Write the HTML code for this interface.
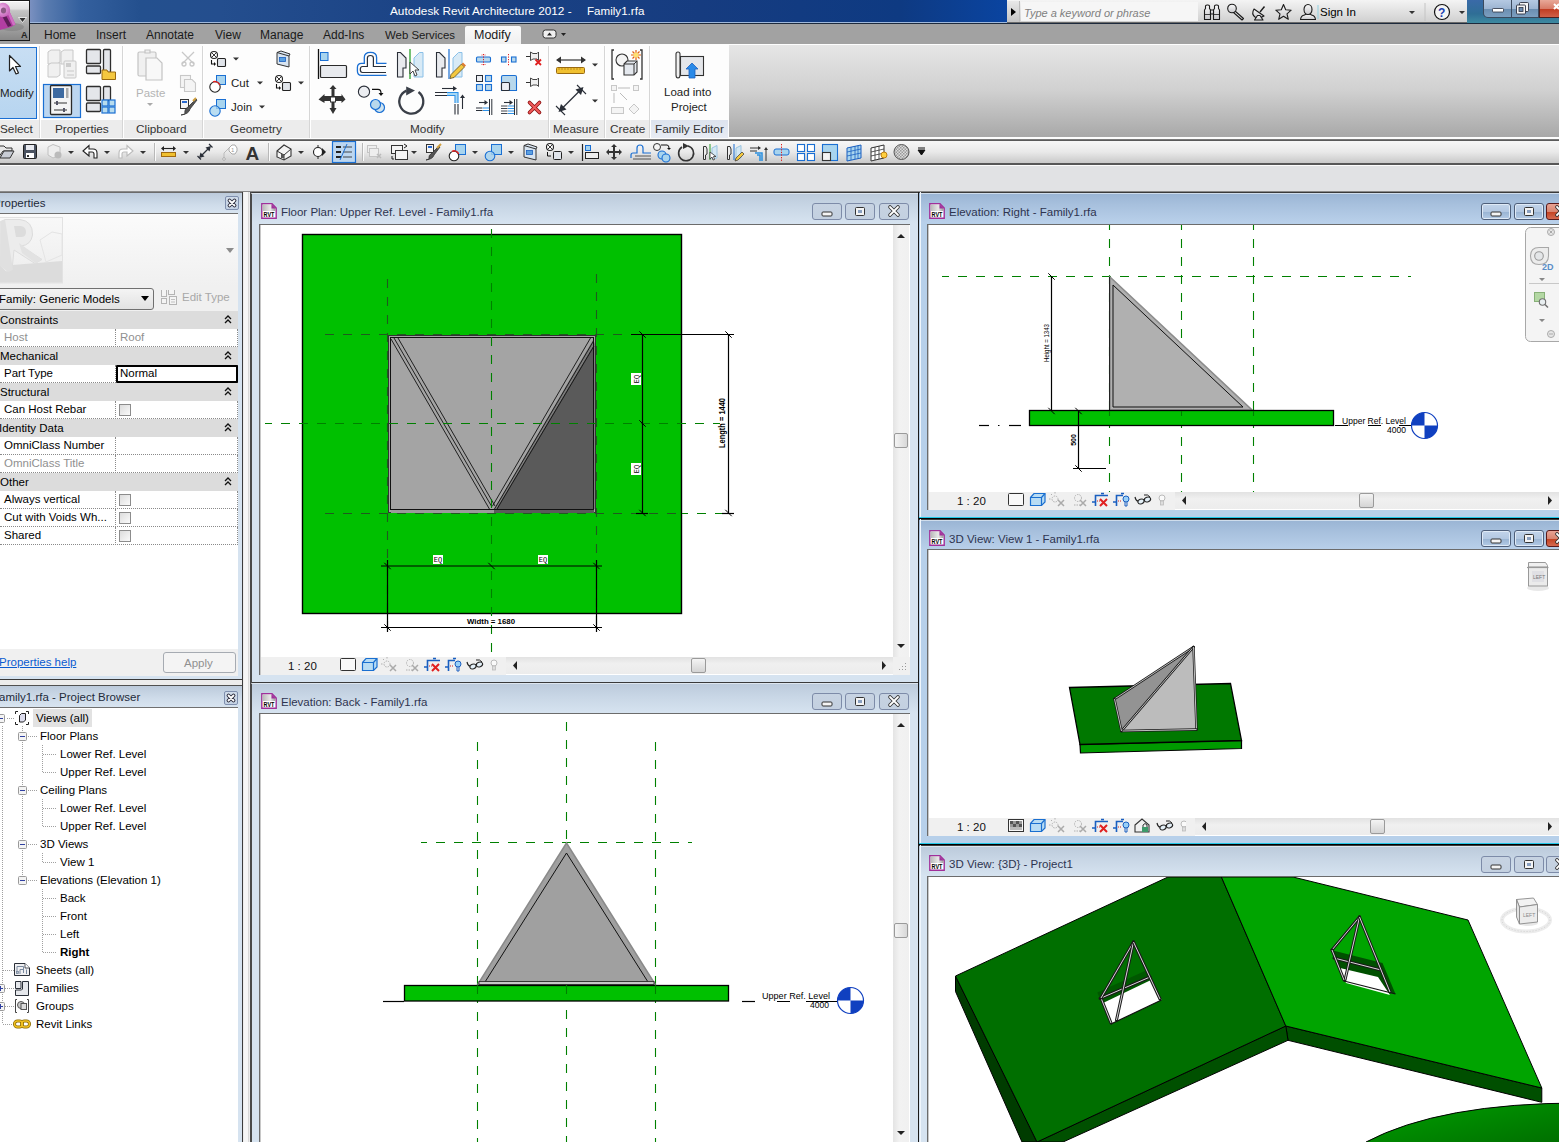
<!DOCTYPE html><html><head><meta charset="utf-8"><style>
html,body{margin:0;padding:0;}
body{width:1559px;height:1142px;overflow:hidden;position:relative;background:#c8d3e0;font-family:"Liberation Sans", sans-serif;}
.t{position:absolute;white-space:nowrap;line-height:14px;font-family:"Liberation Sans", sans-serif;}
svg{overflow:hidden}
</style></head><body>

<div style="position:absolute;left:0px;top:0px;width:1559px;height:23px;background:linear-gradient(90deg,#7a90c0 30px,#5a7cb0 45px,#34609e 80px,#24508e 140px,#244e8e 220px,#1c4486 400px,#163c80 700px,#0e3a82 900px,#0a44a0 1006px);"></div>
<div style="position:absolute;left:0px;top:22px;width:1559px;height:1px;background:#9fb8dc;"></div>
<div style="position:absolute;left:0px;top:23px;width:1559px;height:1px;background:#1d2a3c;"></div>
<div class="t" style="left:390px;top:4px;font-size:11.8px;color:#fff;">Autodesk Revit Architecture 2012 -</div>
<div class="t" style="left:587px;top:4px;font-size:11.6px;color:#fff;">Family1.rfa</div>
<div style="position:absolute;left:0px;top:0px;width:30px;height:41px;background:linear-gradient(180deg,#f4f4f4 0%,#e2e2e2 20%,#c4c4c4 25%,#a8a8a8 60%,#888 100%);border:1px solid #1a1a1a;border-left:none;border-top-width:1px;box-sizing:border-box;box-shadow:inset 0 1px 0 #fff;"></div>
<svg style="position:absolute;left:0px;top:0px;" width="30" height="41" viewBox="0 0 30 41"><defs><radialGradient id="rb" cx="0.4" cy="0.4" r="0.6"><stop offset="0" stop-color="#f0b8ea"/><stop offset="1" stop-color="#c868bc"/></radialGradient></defs><ellipse cx="12" cy="27" rx="12" ry="4" fill="#6a6a6a" opacity="0.35"/><path d="M0 13 L9 10.5 L15.5 24.5 L11 27 L0 30Z" fill="#b23ea2"/><path d="M2.5 17 L6 15.5 L11.5 25.5 L8 27Z" fill="#5e1e58"/><path d="M9 10.5 L15.5 24.5 L13 25.5 L7 12Z" fill="#d070c4"/><circle cx="3" cy="10" r="7.2" fill="url(#rb)"/><ellipse cx="3.5" cy="10.5" rx="2.6" ry="3" fill="#8c5a84"/><path d="M18.5 17.5 L26.5 17.5 L22.5 22.5Z" fill="#333" stroke="#fff" stroke-width="0.8"/><text x="21" y="38" font-size="9" font-weight="bold" fill="#222" font-family="Liberation Sans">A</text></svg>
<div style="position:absolute;left:1007px;top:0px;width:476px;height:23px;background:linear-gradient(180deg,#f4f4f4,#d0d0d0);border-bottom:1px solid #6a6a6a;box-sizing:border-box;"></div>
<div style="position:absolute;left:1007px;top:1px;width:13px;height:21px;background:linear-gradient(180deg,#e8e8e8,#c4c4c4);border-right:1px solid #bbb;box-sizing:border-box;"></div>
<svg style="position:absolute;left:1007px;top:0px;" width="13" height="23" viewBox="1007 0 13 23"><path d="M1011 8 L1016 12 L1011 16Z" fill="#000"/></svg>
<div style="position:absolute;left:1021px;top:2px;width:177px;height:19px;background:#f6f6f6;"></div>
<div class="t" style="left:1024px;top:6px;font-size:11px;color:#808080;font-style:italic;">Type a keyword or phrase</div>
<svg style="position:absolute;left:1007px;top:0px;" width="476" height="23" viewBox="1007 0 476 23">
<defs><linearGradient id="ig" x1="0" y1="0" x2="0" y2="1"><stop offset="0" stop-color="#fafafa"/><stop offset="1" stop-color="#c8c8cc"/></linearGradient></defs>
<g stroke="#1a1a1a" stroke-width="1.1" fill="url(#ig)" stroke-linejoin="round">
<path d="M1205.5 8.5 V6 Q1205.5 5 1207 5 H1208 Q1209.5 5 1209.5 6 V8.5 L1210.5 10 V19.5 H1204.5 V10Z"/>
<path d="M1214.5 8.5 V6 Q1214.5 5 1216 5 H1217 Q1218.5 5 1218.5 6 V8.5 L1219.5 10 V19.5 H1213.5 V10Z"/>
<rect x="1210.5" y="10" width="3" height="4"/>
<path d="M1204.5 14.5 H1210.5 M1213.5 14.5 H1219.5" fill="none" stroke-width="0.8"/>
<path d="M1235 11 L1243.5 18.5 L1242 20 L1233.5 12.5Z"/>
<circle cx="1232" cy="8.5" r="4.3"/>
<path d="M1254 9 Q1251 14 1255 17 Q1259 19 1264 16Z"/>
<path d="M1254.5 20 L1257.5 15.5 L1260 15.5 L1263 20Z"/>
<path d="M1260 12 L1264.5 6.5" fill="none" stroke-width="1.4"/>
<path d="M1283.5 4.5 L1285.7 9.8 L1291.2 10.2 L1287 13.8 L1288.3 19.3 L1283.5 16.3 L1278.7 19.3 L1280 13.8 L1275.8 10.2 L1281.3 9.8Z"/>
<path d="M1300.5 19.5 Q1301 15.5 1304.5 15 L1306 14 H1310 L1311.5 15 Q1315 15.5 1315.5 19.5Z"/>
<ellipse cx="1308" cy="9.5" rx="4" ry="5"/>
</g>
<line x1="1318" y1="5" x2="1318" y2="19" stroke="#8fd0e0" stroke-width="1"/>
<path d="M1409 11 L1415 11 L1412 14Z M1459 11 L1465 11 L1462 14Z" fill="#333"/>
<line x1="1425" y1="3" x2="1425" y2="21" stroke="#c4c4c4"/>
<circle cx="1442" cy="12" r="7.5" fill="#f4f4f4" stroke="#111" stroke-width="1.2"/>
<text x="1438" y="16.5" font-size="12" font-weight="bold" fill="#1a3fb0" font-family="Liberation Sans">?</text>
</svg>
<div class="t" style="left:1320px;top:5px;font-size:11.5px;color:#000;">Sign In</div>
<div style="position:absolute;left:1467px;top:0px;width:92px;height:23px;background:linear-gradient(180deg,#3a6aa8 0%,#2f6e96 60%,#3d8aa0 100%);"></div>
<div style="position:absolute;left:1483px;top:0px;width:29px;height:18px;background:linear-gradient(180deg,#b5c9e2 0%,#9db5d2 50%,#6a8db0 51%,#7c9fc0 100%);border:1px solid #3b4a5e;border-top:none;border-radius:0 0 0 5px;box-sizing:border-box;"></div>
<div style="position:absolute;left:1511px;top:0px;width:28px;height:18px;background:linear-gradient(180deg,#b5c9e2 0%,#9db5d2 50%,#6a8db0 51%,#7c9fc0 100%);border:1px solid #3b4a5e;border-top:none;box-sizing:border-box;"></div>
<div style="position:absolute;left:1539px;top:0px;width:20px;height:18px;background:linear-gradient(180deg,#e8a898 0%,#d87c68 50%,#c03a20 51%,#d06048 100%);border:1px solid #4a2020;border-top:none;border-right:none;box-sizing:border-box;"></div>
<svg style="position:absolute;left:1483px;top:0px;" width="76" height="18" viewBox="1483 0 76 18"><rect x="1492.5" y="8.5" width="11" height="3.5" rx="0.8" fill="#fff" stroke="#2a3040" stroke-width="0.8"/><rect x="1519.5" y="2.5" width="9" height="9" rx="1" fill="#f4f4f4" stroke="#2a3040" stroke-width="0.9"/><rect x="1516.5" y="5" width="9" height="9" rx="1" fill="#f4f4f4" stroke="#2a3040" stroke-width="0.9"/><rect x="1519" y="7.5" width="4" height="4" fill="#6a8ab0" stroke="#2a3040" stroke-width="0.8"/><path d="M1554 4 L1559 9 M1554 9 L1559 4" stroke="#fff" stroke-width="2"/></svg>
<div style="position:absolute;left:30px;top:24px;width:1529px;height:20px;background:#a2a2a2;"></div>
<div style="position:absolute;left:0px;top:41px;width:30px;height:3px;background:#a2a2a2;"></div>
<div class="t" style="left:44px;top:28px;font-size:12.01px;color:#1a1a1a;">Home</div>
<div class="t" style="left:96px;top:28px;font-size:12.01px;color:#1a1a1a;">Insert</div>
<div class="t" style="left:146px;top:28px;font-size:12.01px;color:#1a1a1a;">Annotate</div>
<div class="t" style="left:215px;top:28px;font-size:12.01px;color:#1a1a1a;">View</div>
<div class="t" style="left:260px;top:28px;font-size:12.01px;color:#1a1a1a;">Manage</div>
<div class="t" style="left:323px;top:28px;font-size:12.01px;color:#1a1a1a;">Add-Ins</div>
<div class="t" style="left:385px;top:28px;font-size:11.4px;color:#1a1a1a;">Web Services</div>
<div style="position:absolute;left:465px;top:26px;width:56px;height:18px;background:linear-gradient(180deg,#fafafa,#f0f0f0);border-radius:2px 2px 0 0;"></div>
<div class="t" style="left:474px;top:28px;font-size:12.5px;color:#1a1a1a;">Modify</div>
<svg style="position:absolute;left:540px;top:26px;" width="30" height="18" viewBox="540 26 30 18"><rect x="543" y="30" width="13" height="8" rx="2.5" fill="#f0f0f0" stroke="#333" stroke-width="1"/><path d="M547 35.5 L549.5 32.5 L552 35.5Z" fill="#222"/><path d="M561 33 L566 33 L563.5 36Z" fill="#222"/></svg>
<div style="position:absolute;left:0px;top:44px;width:728px;height:96px;background:#fdfdfd;"></div>
<div style="position:absolute;left:728px;top:44px;width:831px;height:95px;background:#fdfdfd;"></div>
<div style="position:absolute;left:729px;top:45px;width:830px;height:92px;background:linear-gradient(180deg,#e6e6e6 0%,#d0d0d0 50%,#a8a8a8 100%);"></div>
<div style="position:absolute;left:0px;top:120px;width:728px;height:18px;background:#ececec;"></div>
<div style="position:absolute;left:39px;top:46px;width:1px;height:92px;background:#d6d6d6;border-right:1px solid #fff;"></div>
<div style="position:absolute;left:122px;top:46px;width:1px;height:92px;background:#d6d6d6;border-right:1px solid #fff;"></div>
<div style="position:absolute;left:202px;top:46px;width:1px;height:92px;background:#d6d6d6;border-right:1px solid #fff;"></div>
<div style="position:absolute;left:309px;top:46px;width:1px;height:92px;background:#d6d6d6;border-right:1px solid #fff;"></div>
<div style="position:absolute;left:548px;top:46px;width:1px;height:92px;background:#d6d6d6;border-right:1px solid #fff;"></div>
<div style="position:absolute;left:604px;top:46px;width:1px;height:92px;background:#d6d6d6;border-right:1px solid #fff;"></div>
<div style="position:absolute;left:649px;top:46px;width:1px;height:92px;background:#d6d6d6;border-right:1px solid #fff;"></div>
<div style="position:absolute;left:651px;top:120px;width:77px;height:18px;background:linear-gradient(180deg,#dde3ee,#e8ecf4);"></div>
<div class="t" style="left:0px;top:122px;font-size:11.8px;color:#333;">Select</div>
<div class="t" style="left:55px;top:122px;font-size:11.8px;color:#333;">Properties</div>
<div class="t" style="left:136px;top:122px;font-size:11.8px;color:#333;">Clipboard</div>
<div class="t" style="left:230px;top:122px;font-size:11.8px;color:#333;">Geometry</div>
<div class="t" style="left:410px;top:122px;font-size:11.8px;color:#333;">Modify</div>
<div class="t" style="left:553px;top:122px;font-size:11.8px;color:#333;">Measure</div>
<div class="t" style="left:610px;top:122px;font-size:11.8px;color:#333;">Create</div>
<div class="t" style="left:655px;top:122px;font-size:11.8px;color:#333;">Family Editor</div>
<div style="position:absolute;left:0px;top:47px;width:37px;height:72px;background:linear-gradient(180deg,#c8def3,#b7d5f0);border:1px solid #1a6fd3;border-left:none;box-sizing:border-box;"></div>
<div class="t" style="left:0px;top:86px;font-size:11.5px;color:#222;">Modify</div>
<svg style="position:absolute;left:0px;top:44px;" width="728" height="76" viewBox="0 44 728 76"><path d="M9.5 55.5 V71 L13 67.5 L16 74 L18.5 73 L15.5 66.5 L20.5 66.5 Z" fill="#fff" stroke="#222" stroke-width="1.2" stroke-linejoin="round"/><g fill="#f0f0f0" stroke="#c8c8c8" stroke-width="1"><path d="M48 52 L51 50 H60 V62 L57 64 H48Z"/><path d="M61 52 L64 50 H73 V62 L70 64 H61Z"/><path d="M48 65 L51 63 H60 V75 L57 77 H48Z"/><rect x="64" y="61" width="12" height="17" rx="1"/></g><rect x="66" y="63" width="5" height="4" fill="#ccc"/><path d="M67 71 H74 M67 75 H74" stroke="#c8c8c8"/><g fill="#e4e6ea" stroke="#2e2e2e" stroke-width="1.3"><rect x="86.5" y="49.5" width="14" height="14" rx="1"/><rect x="103.5" y="49.5" width="7" height="23" rx="1"/><rect x="86.5" y="66" width="14" height="7.5" rx="1"/></g><path d="M102 70 H107 L108 72 H115.5 V79.5 H102Z" fill="#f4c840" stroke="#9a6a10" stroke-width="1"/><rect x="43.5" y="84.5" width="37" height="33" fill="#bcd6f0" stroke="#1a6fd3" stroke-width="1.2"/><rect x="50.5" y="85.5" width="21" height="29" rx="1" fill="#f4f4f4" stroke="#2a2a2a" stroke-width="1.3"/><rect x="53" y="88" width="11" height="10" fill="#3e6aa0"/><rect x="66" y="88" width="2.5" height="10" fill="#aaa"/><path d="M54 103 H67 M54 110 H67" stroke="#333" stroke-width="1"/><rect x="56" y="101" width="2" height="4" fill="#556"/><rect x="63" y="108" width="2" height="4" fill="#556"/><g fill="#e4e6ea" stroke="#2e2e2e" stroke-width="1.3"><rect x="86.5" y="86.5" width="14" height="14" rx="1"/><rect x="103.5" y="86.5" width="7" height="14" rx="1"/><rect x="86.5" y="103" width="14" height="8.5" rx="1"/></g><g fill="#b8dcee" stroke="#1a6fd3" stroke-width="1.2"><rect x="102" y="100" width="6" height="6"/><rect x="109" y="100" width="6" height="6"/><rect x="102" y="107" width="6" height="6"/><rect x="109" y="107" width="6" height="6"/></g><g fill="#f0f0f0" stroke="#c4c4c4" stroke-width="1.2"><rect x="138" y="52" width="18" height="24" rx="1.5"/><path d="M145 50 H150 V53 H145Z"/><path d="M146 58 H157 L162 63 V80 H146Z" fill="#f8f8f8"/></g><path d="M147 103 L153 103 L150 106Z" fill="#aaa"/><g stroke="#c8c8c8" stroke-width="1.3" fill="none"><path d="M182 52 L194 64 M194 52 L182 64"/><circle cx="184" cy="64" r="2"/><circle cx="192" cy="64" r="2"/></g><g fill="#f4f4f4" stroke="#c8c8c8" stroke-width="1.1"><rect x="180.5" y="75.5" width="10" height="12"/><path d="M184.5 79.5 H192 L195.5 83 V91.5 H184.5Z"/></g><rect x="180.5" y="99.5" width="8" height="9" fill="#f4f4f4" stroke="#333"/><rect x="182" y="101" width="5" height="2" fill="#2a6ad0"/><path d="M185 114 Q184 109 188 107 L196 99 L197 100 L190 109 Q189 114 181 115Z" fill="#555" stroke="#333" stroke-width="0.8"/><path d="M193 101 L196 98" stroke="#d0a040" stroke-width="2"/><circle cx="214" cy="55" r="3.5" fill="#fff" stroke="#222" stroke-width="1.1"/><path d="M211.5 52.5 L216.5 57.5 M216.5 52.5 L211.5 57.5" stroke="#222" stroke-width="0.9"/><rect x="217.5" y="58.5" width="8" height="8" rx="1" fill="#e0e4ea" stroke="#222" stroke-width="1.1"/><path d="M211.5 60 V64 H215" stroke="#111" stroke-width="1.1" fill="none"/><path d="M214 62 L216 64 L214 66Z" fill="#111"/><path d="M233 57.5 H239 L236 60.5Z" fill="#333"/><rect x="216.5" y="75.5" width="9" height="9" fill="#a8d4ee" stroke="#1a6fd3"/><circle cx="215" cy="87" r="5.2" fill="#fff" stroke="#222" stroke-width="1.1"/><path d="M213 81.9 A5.2 5.2 0 0 1 219.8 85" stroke="#e02020" stroke-width="1.3" fill="none"/><path d="M257 81.5 H263 L260 84.5Z" fill="#333"/><rect x="216.5" y="99.5" width="9" height="9" fill="#a8d4ee" stroke="#1a6fd3"/><circle cx="215" cy="111" r="5.2" fill="#a8d4ee" fill-opacity="0.8" stroke="#1a6fd3" stroke-width="1.1"/><path d="M259 105.5 H265 L262 108.5Z" fill="#333"/><path d="M277 52.5 L289 56 V67 L277 64Z M277 52.5 L281 51 L290 54 L289 56" fill="#d8e4f0" stroke="#333" stroke-width="1"/><rect x="279.5" y="57.5" width="6" height="4" fill="#5aa0e0" stroke="#1a5fc0" stroke-width="0.8"/><circle cx="279" cy="79" r="3.5" fill="#fff" stroke="#222" stroke-width="1.1"/><path d="M276.5 76.5 L281.5 81.5 M281.5 76.5 L276.5 81.5" stroke="#222" stroke-width="0.9"/><rect x="282.5" y="82.5" width="8" height="8" rx="1" fill="#e0e4ea" stroke="#222" stroke-width="1.1"/><path d="M276.5 84 V88 H280" stroke="#111" stroke-width="1.1" fill="none"/><path d="M279 86 L281 88 L279 90Z" fill="#111"/><path d="M298 81.5 H304 L301 84.5Z" fill="#333"/><path d="M318.5 49 V79" stroke="#111" stroke-width="1.3"/><rect x="320.5" y="52.5" width="7.5" height="8" fill="#a8d4ee" stroke="#1a6fd3"/><rect x="320.5" y="65.5" width="26" height="12" rx="1" fill="#e8eaee" stroke="#2a2a2a" stroke-width="1.2"/><path d="M386.5 63.3 H376.6 V57.5 Q376.6 52.3 370.5 52.3 Q364.3 52.3 364.3 57.5 V63.3 H361.5 Q357.4 63.3 357.4 67.5 V71 Q357.4 75.3 361.5 75.3 H386.5" fill="none" stroke="#1a6fd3" stroke-width="1.3"/><path d="M386 66.5 H373.4 V58 Q373.4 55.5 370.4 55.5 Q367.4 55.5 367.4 58 V66.5 H362.5 Q360.3 66.5 360.3 69.5 Q360.3 72.5 362.5 72.5 H386" fill="none" stroke="#2a2f38" stroke-width="1.2"/><path d="M397.5 52.5 H400.5 L406 58 V68 H403 V77 H397.5Z" fill="#e8eaee" stroke="#2a2f38" stroke-width="1.1"/><line x1="410" y1="49" x2="410" y2="79" stroke="#1a9a1a" stroke-width="1.2"/><path d="M414 58 L419.5 52.5 H423 V77 H414Z" fill="#d8eaf6" stroke="#8ac0e8"/><path d="M410 62 V74 L413 71 L415 76 L417 75 L415 70 H419Z" fill="#fff" stroke="#333" stroke-width="0.9"/><path d="M436.5 52.5 H439.5 L445 58 V68 H442 V77 H436.5Z" fill="#e8eaee" stroke="#2a2f38" stroke-width="1.1"/><line x1="449" y1="49" x2="449" y2="79" stroke="#1a6fd3" stroke-width="1.2"/><path d="M453 58 L458.5 52.5 H462 V77 H453Z" fill="#d8eaf6" stroke="#8ac0e8"/><path d="M450 78.5 L451 74.5 L461.5 64 L464.5 67 L454 77.5Z" fill="#f4c840" stroke="#5a4a20" stroke-width="0.8"/><path d="M461.5 64 L463 62.5 L466 65.5 L464.5 67Z" fill="#e07a30"/><path d="M333 85 L336.5 89 H334.5 V96 H341.5 V94 L345.5 99.5 L341.5 103 V101 H334.5 V108 H336.5 L333 114 L329.5 108 H331.5 V101 H324.5 V103 L318.5 99.5 L324.5 94 V96 H331.5 V89 H329.5Z" fill="#333"/><rect x="330.5" y="97" width="5" height="5" fill="#fff" stroke="#333"/><circle cx="364" cy="91.7" r="5.6" fill="#eceef2" stroke="#2a2f38" stroke-width="1.1"/><path d="M372 89.3 H378 Q381 89.3 381 93" stroke="#111" stroke-width="1.2" fill="none"/><path d="M378.5 93 L383.5 93 L381 96Z" fill="#111"/><circle cx="379.5" cy="107.5" r="5" fill="#cfe4f0" stroke="#1a6fd3" stroke-width="1.2"/><circle cx="375.5" cy="104.5" r="5" fill="#b8d8ec" stroke="#1a6fd3" stroke-width="1.2"/><path d="M418.5 92 A12 12 0 1 1 406.5 90.6" fill="none" stroke="#3a3f48" stroke-width="2.3"/><path d="M406.2 86.4 L415 90.5 L406.2 95.5Z" fill="#3a3f48"/><path d="M442 88.5 H454" stroke="#2a2f38" stroke-width="1.1"/><path d="M453 86 L457 88.5 L453 91Z" fill="#2a2f38"/><path d="M435 92.5 H447 M435 95.5 H447" stroke="#2a2f38" stroke-width="1.1"/><path d="M447 94 H456.5 V103" stroke="#a8d8f4" stroke-width="2.5" fill="none"/><path d="M447 92.5 H458 V103 M447 95.5 H455 V103" stroke="#2a90e8" stroke-width="1.1" fill="none"/><path d="M455 104 V114.5 M458 104 V114.5" stroke="#2a2f38" stroke-width="1.1"/><path d="M462.5 109 V97" stroke="#2a2f38" stroke-width="1.1"/><path d="M460 98 L462.5 94.5 L465 98Z" fill="#2a2f38"/><rect x="476.5" y="57" width="14" height="5" rx="1" fill="#b8d8ec" stroke="#1a6fd3" stroke-width="1.1"/><path d="M483.5 54 V65.5" stroke="#e02020" stroke-width="1" stroke-dasharray="1.2 1.3"/><path d="M481.5 55 H485.5 M481.5 64.5 H485.5" stroke="#e02020" stroke-width="0.8" stroke-dasharray="1 2"/><rect x="501.5" y="57" width="4.5" height="5" fill="#b8d8ec" stroke="#1a6fd3" stroke-width="1.1"/><rect x="511.5" y="57" width="4.5" height="5" fill="#b8d8ec" stroke="#1a6fd3" stroke-width="1.1"/><path d="M508.5 54 V65.5" stroke="#e02020" stroke-width="1" stroke-dasharray="1.2 1.3"/><path d="M526 56.5 H530" stroke="#333"/><path d="M530.5 52 L533 53.5 H537 L538.5 52 V60.5 L537 59 H533 L530.5 60.5Z" fill="#f0f0f0" stroke="#333" stroke-width="0.9"/><path d="M535.5 59.5 L541 65 M541 59.5 L535.5 65" stroke="#e02020" stroke-width="1.8"/><rect x="476.5" y="75.5" width="6" height="6" fill="#eceef2" stroke="#2a2f38" stroke-width="1"/><g fill="#b8d8ec" stroke="#1a6fd3" stroke-width="1.1"><rect x="485.5" y="75.5" width="6" height="6"/><rect x="476.5" y="84.5" width="6" height="6"/><rect x="485.5" y="84.5" width="6" height="6"/></g><path d="M501.5 90.5 V77 Q501.5 75.5 503 75.5 H515 Q516.5 75.5 516.5 77 V90.5Z" fill="#b8d8ec" stroke="#1a6fd3" stroke-width="1.1"/><rect x="501.5" y="82.5" width="8" height="8" rx="1" fill="#eceef2" stroke="#2a2f38" stroke-width="1.1"/><path d="M526 82.5 H530" stroke="#333"/><path d="M530.5 78 L533 79.5 H537 L538.5 78 V86.5 L537 85 H533 L530.5 86.5Z" fill="#f0f0f0" stroke="#333" stroke-width="0.9"/><path d="M479 102.5 H485" stroke="#2a2f38" stroke-width="1.1"/><path d="M484.5 100 L488 102.5 L484.5 105Z" fill="#2a2f38"/><path d="M476 108 H482.5 M476 110.5 H482.5" stroke="#2a2f38" stroke-width="1"/><path d="M483 108 H489 M483 110.5 H489" stroke="#2a90e8" stroke-width="1.1"/><path d="M489.5 99 V115 M491.8 99 V115" stroke="#2a2f38" stroke-width="1"/><path d="M504 102.5 H510" stroke="#2a2f38" stroke-width="1.1"/><path d="M509.5 100 L513 102.5 L509.5 105Z" fill="#2a2f38"/><path d="M501 106 H507.5 M501 108.5 H507.5 M501 111 H507.5 M501 113.5 H507.5" stroke="#2a2f38" stroke-width="0.9"/><path d="M508 106 H514 M508 108.5 H514 M508 111 H514 M508 113.5 H514" stroke="#2a90e8" stroke-width="1"/><path d="M514.5 99 V115 M516.8 99 V115" stroke="#2a2f38" stroke-width="1"/><path d="M529.5 102.5 L539.5 112.5 M539.5 102.5 L529.5 112.5" stroke="#8a1010" stroke-width="3.6" stroke-linecap="round"/><path d="M529.5 102.5 L539.5 112.5 M539.5 102.5 L529.5 112.5" stroke="#f05a5a" stroke-width="2" stroke-linecap="round"/><path d="M557 60 H585" stroke="#333" stroke-width="1.2"/><path d="M556 60 L561 56.5 V63.5Z M586 60 L581 56.5 V63.5Z" fill="#333"/><rect x="556.5" y="67.5" width="28" height="6" rx="1" fill="#f0c030" stroke="#9a6a10"/><path d="M559 68 V70 M562 68 V70 M565 68 V70 M568 68 V70 M571 68 V70 M574 68 V70 M577 68 V70 M580 68 V70" stroke="#9a6a10" stroke-width="0.6"/><path d="M592 63.5 H598 L595 66.5Z" fill="#333"/><path d="M562 108.5 L580 90.5" stroke="#2a2f38" stroke-width="1.3"/><path d="M558.5 112 L561 104 L566.5 109.5Z M583.5 87 L581 95 L575.5 89.5Z" fill="#2a2f38"/><path d="M556 106 L565 115 M577 85 L586 94" stroke="#2a2f38" stroke-width="1.1"/><path d="M592 99.5 H598 L595 102.5Z" fill="#333"/><path d="M614 50 H612 V79 H614 M640 50 H642 V79 H640" stroke="#333" stroke-width="1.3" fill="none"/><circle cx="622" cy="60" r="6" fill="#f4f4f4" stroke="#333" stroke-width="1.1"/><path d="M624 64 L627 61 H637 V72 L634 75 H624Z" fill="#e4e8ee" stroke="#333" stroke-width="1.1"/><path d="M624 64 H634 V75 M634 64 L637 61" fill="none" stroke="#333" stroke-width="1"/><g stroke="#e06010" stroke-width="1.2"><path d="M636 50 V60 M631 55 H641 M632.5 51.5 L639.5 58.5 M639.5 51.5 L632.5 58.5"/></g><circle cx="636" cy="55" r="2.5" fill="#ffe070"/><g fill="#f4f4f4" stroke="#c8c8c8" stroke-width="1"><rect x="611.5" y="85.5" width="5" height="5"/><rect x="633.5" y="85.5" width="5" height="5"/><rect x="611.5" y="107.5" width="12" height="6"/><path d="M634 104 L639 109 L634 114 L629 109Z"/></g><path d="M618 88 H630 M614 93 V103 M620 93 L627 100" stroke="#bbb" stroke-width="1"/><path d="M676 54 Q676 52 678 52 Q680 52 680 54 V75 Q680 78 678 78 Q676 78 676 75Z" fill="#f0f0f0" stroke="#333" stroke-width="1.1"/><rect x="680.5" y="56.5" width="23" height="19" fill="#e4e6ea" stroke="#333" stroke-width="1.1"/><path d="M692 63 L698 69 H695 V78 H689 V69 H686Z" fill="#2a8ae8" stroke="#1a5fc0" stroke-width="0.8"/></svg>
<div class="t" style="left:664px;top:85px;font-size:11.5px;color:#222;">Load into</div>
<div class="t" style="left:671px;top:100px;font-size:11.5px;color:#222;">Project</div>
<div class="t" style="left:136px;top:86px;font-size:11.5px;color:#b4b4b4;">Paste</div>
<div class="t" style="left:231px;top:76px;font-size:11.5px;color:#222;">Cut</div>
<div class="t" style="left:231px;top:100px;font-size:11.5px;color:#222;">Join</div>
<div style="position:absolute;left:0px;top:138px;width:1559px;height:1px;background:#fdfdfd;"></div>
<div style="position:absolute;left:0px;top:139px;width:1559px;height:2px;background:linear-gradient(180deg,#8a8a8a,#4a4a4a);"></div>
<div style="position:absolute;left:0px;top:141px;width:1559px;height:22px;background:linear-gradient(180deg,#f7f7f7 0%,#e9e9e9 50%,#c9c9c9 100%);"></div>
<div style="position:absolute;left:0px;top:163px;width:1559px;height:2px;background:#575757;"></div>
<svg style="position:absolute;left:0px;top:141px;" width="1000" height="22" viewBox="0 141 1000 22"><path d="M-2 146 H4 L6 148 H12 V151 H3 L-2 158Z" fill="#e8e8e8" stroke="#333" stroke-width="1"/><path d="M0 158 L4 151 H14 L10 158Z" fill="#c8ccd4" stroke="#333" stroke-width="1"/><rect x="23.5" y="144.5" width="13" height="14" rx="1" fill="#4a5260" stroke="#222"/><rect x="26" y="145" width="8" height="5" fill="#e8eaf0"/><rect x="26" y="153" width="8" height="5" fill="#fff"/><rect x="27" y="155" width="2" height="2" fill="#333"/><path d="M48 147 L53 144.5 L60 147 V155 L53 158 L48 155Z" fill="#eee" stroke="#c0c0c0"/><circle cx="58" cy="155" r="3.5" fill="#bbb"/><path d="M68 151 H74 L71 154Z" fill="#333"/><path d="M83 151 L89 145.5 V149 H93 Q97 149 97 153 V158 H94 V154 Q94 152 92 152 H89 V156Z" fill="#fff" stroke="#222" stroke-width="1.1"/><path d="M104 151 H110 L107 154Z" fill="#333"/><path d="M133 151 L127 145.5 V149 H123 Q119 149 119 153 V158 H122 V154 Q122 152 124 152 H127 V156Z" fill="#fff" stroke="#bbb" stroke-width="1.1"/><path d="M140 151 H146 L143 154Z" fill="#333"/><line x1="154.5" y1="143" x2="154.5" y2="161" stroke="#b8b8b8"/><line x1="155.5" y1="143" x2="155.5" y2="161" stroke="#fafafa"/><path d="M162 148.5 H175" stroke="#222" stroke-width="1.1"/><path d="M161 148.5 L164 146 V151Z M176 148.5 L173 146 V151Z" fill="#222"/><rect x="161.5" y="152.5" width="14" height="4" fill="#f0c030" stroke="#a06a10"/><path d="M183 151 H189 L186 154Z" fill="#333"/><path d="M201.5 155.5 L208.5 148.5" stroke="#2a2f38" stroke-width="1.3"/><path d="M199 158 L200.5 152.5 L204.5 156.5Z M211 146 L209.5 151.5 L205.5 147.5Z" fill="#2a2f38"/><path d="M197.5 156 L201 159.5 M209 144 L212.5 147.5" stroke="#2a2f38" stroke-width="1.2"/><path d="M224 158 V153 L229 148" stroke="#bbb" fill="none"/><circle cx="224" cy="159" r="1.3" fill="#fff" stroke="#aaa"/><path d="M229 148 L232 145 H235 L237 148 V151 L235 154 H232 L229 151Z" fill="#fff" stroke="#aaa"/><text x="231" y="152" font-size="6" fill="#999" font-family="Liberation Sans">1</text><text x="245.5" y="159.5" font-size="19" font-weight="bold" fill="#333" font-family="Liberation Sans">A</text><line x1="268.5" y1="143" x2="268.5" y2="161" stroke="#b8b8b8"/><line x1="269.5" y1="143" x2="269.5" y2="161" stroke="#fafafa"/><path d="M277 151 L284 145 L291 149 V156 L284 160 L277 157Z" fill="#f4f4f4" stroke="#333" stroke-width="1.1"/><path d="M277 151 L284 155 L291 149 M284 155 V160" stroke="#333" fill="none"/><rect x="281" y="154" width="3" height="4" fill="#555"/><path d="M298 151 H304 L301 154Z" fill="#333"/><circle cx="318" cy="152" r="4.5" fill="#fff" stroke="#222" stroke-width="1.1"/><path d="M322 148 L326 152 L322 156Z" fill="#222"/><path d="M318 147 V145 M318 157 V159" stroke="#222"/><rect x="332.5" y="141.5" width="23" height="21" fill="#bcd6f0" stroke="#1a6fd3" stroke-width="1.2"/><path d="M336 147 H341 M336 152 H341 M336 157 H341" stroke="#222" stroke-width="2"/><path d="M343 147 H352 M343 152 H352 M343 157 H352" stroke="#222" stroke-width="0.8"/><path d="M340 160 L347 144" stroke="#1a6fd3" stroke-width="1"/><line x1="362.5" y1="143" x2="362.5" y2="161" stroke="#b8b8b8"/><line x1="363.5" y1="143" x2="363.5" y2="161" stroke="#fafafa"/><rect x="367.5" y="145.5" width="9" height="7" fill="#eee" stroke="#c4c4c4"/><rect x="369.5" y="148.5" width="9" height="8" fill="#eee" stroke="#c4c4c4"/><path d="M377 154 L381 158 M381 154 L377 158" stroke="#bbb" stroke-width="1.5"/><rect x="391.5" y="145.5" width="11" height="8" fill="#f4f4f4" stroke="#333"/><rect x="395.5" y="150.5" width="12" height="9" fill="#f4f4f4" stroke="#333"/><path d="M404 144 L407 146 L404 148 M392 156 L392 159 H394" stroke="#222" fill="none"/><path d="M411 151 H417 L414 154Z" fill="#333"/><rect x="426.5" y="144.5" width="7" height="8" fill="#f4f4f4" stroke="#333"/><rect x="428" y="146" width="4" height="2" fill="#2a6ad0"/><path d="M429 159 Q428 155 432 153 L439 146 L440 147 L434 155 Q433 159 426 160Z" fill="#555" stroke="#333" stroke-width="0.8"/><path d="M437 148 L441 144" stroke="#d0a040" stroke-width="2"/><rect x="455.5" y="144.5" width="10" height="10" fill="#a8d4ee" stroke="#1a6fd3"/><circle cx="454" cy="156" r="4.8" fill="#fff" stroke="#222" stroke-width="1.1"/><path d="M452 151.3 A4.8 4.8 0 0 1 458.7 154" stroke="#e02020" stroke-width="1.3" fill="none"/><path d="M472 151 H478 L475 154Z" fill="#333"/><rect x="491.5" y="144.5" width="10" height="10" fill="#a8d4ee" stroke="#1a6fd3"/><circle cx="490" cy="156" r="4.8" fill="#a8d4ee" fill-opacity="0.85" stroke="#1a6fd3" stroke-width="1.1"/><path d="M508 151 H514 L511 154Z" fill="#333"/><path d="M524 145.5 L536 149 V160 L524 157Z M524 145.5 L528 144 L537 147 L536 149" fill="#d8e4f0" stroke="#333" stroke-width="1"/><rect x="526.5" y="150.5" width="6" height="4" fill="#5aa0e0" stroke="#1a5fc0" stroke-width="0.8"/><circle cx="550" cy="147" r="3.5" fill="#fff" stroke="#222" stroke-width="1.1"/><path d="M547.5 144.5 L552.5 149.5 M552.5 144.5 L547.5 149.5" stroke="#222" stroke-width="0.9"/><rect x="553.5" y="151.5" width="8" height="8" rx="1" fill="#e0e4ea" stroke="#222"/><path d="M547.5 152 V156 H551" stroke="#111" fill="none"/><path d="M568 151 H574 L571 154Z" fill="#333"/><path d="M582.5 144 V161" stroke="#222" stroke-width="1.2"/><rect x="585.5" y="145.5" width="5" height="5" fill="#a8d4ee" stroke="#1a6fd3"/><rect x="585.5" y="152.5" width="13" height="6" fill="#eee" stroke="#222"/><path d="M614 144 L617 147 H615 V151 H619 V149 L622 152 L619 155 V153 H615 V157 H617 L614 160 L611 157 H613 V153 H609 V155 L606 152 L609 149 V151 H613 V147 H611Z" fill="#333"/><path d="M631 158 V155 Q631 153 633 153 H637 V148 Q637 145 640 145 Q643 145 643 148 V153 H651" fill="none" stroke="#1a6fd3" stroke-width="1.2"/><path d="M633 159 H651 M635 156 H651" stroke="#333" stroke-width="0.8"/><circle cx="657" cy="147" r="3.5" fill="#f4f4f4" stroke="#333"/><path d="M661 145 H667 Q669 145 669 148" stroke="#111" fill="none"/><path d="M667 148 H671 L669 150Z" fill="#111"/><circle cx="662" cy="155" r="4" fill="#a8d4ee" stroke="#1a6fd3" stroke-width="1.1"/><circle cx="666" cy="158" r="4" fill="#a8d4ee" stroke="#1a6fd3" stroke-width="1.1"/><path d="M682 147 A7.5 7.5 0 1 0 688 146" fill="none" stroke="#333" stroke-width="1.6"/><path d="M683 143 L689 146 L683 149Z" fill="#333"/><path d="M703.5 146.5 H706 L707 149 V154 L705.5 155 V159.5 H703.5Z" fill="#eee" stroke="#333" stroke-width="1"/><line x1="710" y1="144" x2="710" y2="160" stroke="#2aa02a"/><path d="M712 148 L717 145.5 V158 L712 159Z" fill="#d4e8f4" stroke="#9ac4e0"/><path d="M710 152 V159 L712 157 L713 160 L714.5 159.5 L713.5 156.5 H716Z" fill="#fff" stroke="#333" stroke-width="0.8"/><path d="M727.5 146.5 H730 L731 149 V154 L729.5 155 V159.5 H727.5Z" fill="#eee" stroke="#333" stroke-width="1"/><line x1="734" y1="144" x2="734" y2="160" stroke="#1a6fd3"/><path d="M736 148 L741 145.5 V158 L736 159Z" fill="#d4e8f4" stroke="#9ac4e0"/><path d="M735 161 L736 158 L742 152 L744 154 L738 160Z" fill="#f4c840" stroke="#333" stroke-width="0.7"/><path d="M750 148 H760 M750 151 H757" stroke="#333"/><path d="M758 146 L761 148 L758 150Z" fill="#333"/><path d="M755 153 H762 V161 M757 155 H760 V161" stroke="#2a90e0" stroke-width="1.5" fill="none"/><path d="M766 161 V149" stroke="#333"/><path d="M764 150 L766 147 L768 150Z" fill="#333"/><rect x="774" y="149" width="15" height="6" rx="2" fill="#a8d4ee" stroke="#1a6fd3"/><path d="M781.5 144 V161" stroke="#e02020" stroke-dasharray="1.3 1.3"/><g fill="#fff" stroke="#1a6fd3" stroke-width="1.1"><rect x="797.5" y="144.5" width="7" height="7"/><rect x="807.5" y="144.5" width="7" height="7"/><rect x="797.5" y="153.5" width="7" height="7"/><rect x="807.5" y="153.5" width="7" height="7"/></g><rect x="822.5" y="144.5" width="15" height="16" fill="#a8d4ee" stroke="#1a6fd3" stroke-width="1.1"/><rect x="822.5" y="152.5" width="8" height="8" fill="#f4f4f4" stroke="#333" stroke-width="1.1"/><path d="M847 148 L861 145 V158 L847 161Z" fill="#a8d4ee" stroke="#1a5fc0"/><path d="M851 147 V160 M855 146 V159 M858 145.5 V158.5 M847 152 L861 149 M847 156 L861 153" stroke="#1a5fc0" stroke-width="0.8"/><path d="M871 148 L884 145 V158 L871 161Z" fill="#fff" stroke="#333"/><path d="M875 147 V160 M879 146 V159 M871 152 L884 149 M871 156 L884 153" stroke="#333" stroke-width="0.8"/><circle cx="884" cy="155" r="3" fill="#ffd040" stroke="#c08010"/><defs><pattern id="chk" width="3" height="3" patternUnits="userSpaceOnUse"><rect width="3" height="3" fill="#ddd"/><rect width="1.5" height="1.5" fill="#999"/><rect x="1.5" y="1.5" width="1.5" height="1.5" fill="#999"/></pattern></defs><circle cx="901.5" cy="152" r="7.5" fill="url(#chk)" stroke="#555"/><path d="M918 148 H925 M918 150 H925 L921.5 155Z" stroke="#111" fill="#111"/></svg>
<div style="position:absolute;left:0px;top:165px;width:1559px;height:26px;background:#e1e2e4;"></div>
<div style="position:absolute;left:0px;top:165px;width:1559px;height:1px;background:#fdfdfd;"></div>
<div style="position:absolute;left:0px;top:191px;width:1559px;height:1px;background:#8a8a8a;"></div>
<div style="position:absolute;left:0px;top:192px;width:1559px;height:950px;background:#eaeaea;"></div>
<div style="position:absolute;left:0px;top:192px;width:250px;height:950px;background:#ececec;"></div>
<div style="position:absolute;left:242px;top:192px;width:1px;height:950px;background:#3c3c3c;"></div>
<div style="position:absolute;left:244px;top:192px;width:4px;height:950px;background:#f6f6f6;"></div>
<div style="position:absolute;left:248px;top:192px;width:1px;height:950px;background:#d8d8d8;"></div>
<div style="position:absolute;left:0px;top:192px;width:242px;height:488px;background:#d6e3f0;"></div>
<div style="position:absolute;left:0px;top:192px;width:242px;height:1px;background:#6a6a6a;"></div>
<div style="position:absolute;left:0px;top:193px;width:242px;height:20px;background:linear-gradient(180deg,#bccadb 0%,#cfdcea 60%,#d8e4f0 100%);"></div>
<div class="t" style="left:-7px;top:196px;font-size:11.5px;color:#1e2a3a;">Properties</div>
<div style="position:absolute;left:225px;top:196px;width:14px;height:14px;border:1px solid #7f8fae;border-radius:2px;background:linear-gradient(180deg,#d0dcea,#c4d2e4);box-sizing:border-box;"></div><svg style="position:absolute;left:225px;top:196px;" width="14" height="14" viewBox="225 196 14 14"><path d="M229.5 200.5 L234.5 205.5 M234.5 200.5 L229.5 205.5" stroke="#2a2a3a" stroke-width="3.8" stroke-linecap="round"/><path d="M229.5 200.5 L234.5 205.5 M234.5 200.5 L229.5 205.5" stroke="#fff" stroke-width="1.8" stroke-linecap="round"/></svg>
<div style="position:absolute;left:0px;top:213px;width:238px;height:1px;background:#707070;"></div>
<div style="position:absolute;left:0px;top:214px;width:238px;height:72px;background:linear-gradient(180deg,#fbfbfb,#f0f0f0);"></div>
<svg style="position:absolute;left:0px;top:216px;" width="66" height="70" viewBox="0 216 66 70"><defs><linearGradient id="pv" x1="0" y1="0" x2="0" y2="1"><stop offset="0" stop-color="#f8f8f8"/><stop offset="1" stop-color="#ececec"/></linearGradient></defs><rect x="-1" y="217.5" width="63.5" height="65.5" fill="url(#pv)" stroke="#e2e2e2"/><path d="M0 266 L62 261 V282.5 H0Z" fill="#dcdcdc"/><path d="M5 219.5 H20 Q33 221 32.5 235 Q31 245 21 246 L42 259.5 L35 263.5 L14 250 L12 270 L6 272 L0 266 V222Z" fill="#ececec" stroke="#dcdcdc"/><path d="M1 221 L5 219.5 L13 270 L8 272 L0 266Z" fill="#e0e0e0"/><path d="M14 226 H21 Q26 227 26 232 Q26 237 21 237 H16Z" fill="#dcdcdc"/><path d="M19 243 L42 259.5 L36 263.5 L22 253Z" fill="#e2e2e2"/><path d="M40 240 L52 232 L62 234 V255 L46 262Z" fill="none" stroke="#e4e4e4"/></svg>
<svg style="position:absolute;left:222px;top:244px;" width="14" height="12" viewBox="222 244 14 12"><path d="M226 248 L234 248 L230 253Z" fill="#8c8c8c"/></svg>
<div style="position:absolute;left:0px;top:286px;width:238px;height:25px;background:#f0f0f0;"></div>
<div style="position:absolute;left:-4px;top:288px;width:158px;height:22px;background:linear-gradient(180deg,#f4f4f4,#e2e2e2);border:1px solid #707070;border-radius:3px;box-sizing:border-box;"></div>
<div class="t" style="left:-1px;top:292px;font-size:11.5px;color:#000;">Family: Generic Models</div>
<svg style="position:absolute;left:138px;top:292px;" width="14" height="12" viewBox="138 292 14 12"><path d="M141 296 L149 296 L145 301Z" fill="#000"/></svg>
<svg style="position:absolute;left:160px;top:290px;" width="18" height="18" viewBox="160 290 18 18"><g fill="#f4f4f4" stroke="#b4b4b4" stroke-width="1"><rect x="161.5" y="289.5" width="5" height="7"/><rect x="161.5" y="298.5" width="5" height="5"/><rect x="168.5" y="289.5" width="6" height="5"/><rect x="169.5" y="296.5" width="7" height="8"/></g><path d="M171 299.5 H175 M171 302 H175" stroke="#b4b4b4" stroke-width="0.8"/></svg>
<div class="t" style="left:182px;top:290px;font-size:11.5px;color:#a8a8a8;">Edit Type</div>
<div style="position:absolute;left:0px;top:311px;width:238px;height:18px;background:#dcdcdc;"></div>
<div class="t" style="left:0px;top:313px;font-size:11.5px;color:#000;">Constraints</div>
<svg style="position:absolute;left:222px;top:311px;" width="12" height="18" viewBox="222 311 12 18"><path d="M225 319 L228 316 L231 319 M225 323 L228 320 L231 323" stroke="#111" stroke-width="1.3" fill="none"/></svg>
<div style="position:absolute;left:0px;top:329px;width:238px;height:18px;background:#fff;border-bottom:1px dotted #8a8a8a;box-sizing:border-box;"></div>
<div style="position:absolute;left:115px;top:329px;width:1px;height:18px;border-left:1px dotted #8a8a8a;"></div>
<div style="position:absolute;left:237px;top:329px;width:1px;height:18px;border-left:1px dotted #8a8a8a;"></div>
<div class="t" style="left:4px;top:330px;font-size:11.5px;color:#909090;">Host</div>
<div class="t" style="left:120px;top:330px;font-size:11.5px;color:#909090;">Roof</div>
<div style="position:absolute;left:0px;top:347px;width:238px;height:18px;background:#dcdcdc;"></div>
<div class="t" style="left:0px;top:349px;font-size:11.5px;color:#000;">Mechanical</div>
<svg style="position:absolute;left:222px;top:347px;" width="12" height="18" viewBox="222 347 12 18"><path d="M225 355 L228 352 L231 355 M225 359 L228 356 L231 359" stroke="#111" stroke-width="1.3" fill="none"/></svg>
<div style="position:absolute;left:0px;top:365px;width:238px;height:18px;background:#fff;border-bottom:1px dotted #8a8a8a;box-sizing:border-box;"></div>
<div style="position:absolute;left:115px;top:365px;width:1px;height:18px;border-left:1px dotted #8a8a8a;"></div>
<div style="position:absolute;left:237px;top:365px;width:1px;height:18px;border-left:1px dotted #8a8a8a;"></div>
<div class="t" style="left:4px;top:366px;font-size:11.5px;color:#000;">Part Type</div>
<div style="position:absolute;left:116px;top:365px;width:122px;height:18px;border:2px solid #000;border-radius:1px;background:#fff;box-sizing:border-box;"></div>
<div class="t" style="left:120px;top:366px;font-size:11.5px;color:#000;">Normal</div>
<div style="position:absolute;left:0px;top:383px;width:238px;height:18px;background:#dcdcdc;"></div>
<div class="t" style="left:0px;top:385px;font-size:11.5px;color:#000;">Structural</div>
<svg style="position:absolute;left:222px;top:383px;" width="12" height="18" viewBox="222 383 12 18"><path d="M225 391 L228 388 L231 391 M225 395 L228 392 L231 395" stroke="#111" stroke-width="1.3" fill="none"/></svg>
<div style="position:absolute;left:0px;top:401px;width:238px;height:18px;background:#fff;border-bottom:1px dotted #8a8a8a;box-sizing:border-box;"></div>
<div style="position:absolute;left:115px;top:401px;width:1px;height:18px;border-left:1px dotted #8a8a8a;"></div>
<div style="position:absolute;left:237px;top:401px;width:1px;height:18px;border-left:1px dotted #8a8a8a;"></div>
<div class="t" style="left:4px;top:402px;font-size:11.5px;color:#000;">Can Host Rebar</div>
<div style="position:absolute;left:119px;top:404px;width:12px;height:12px;border:1px solid #8c8c8c;background:linear-gradient(135deg,#dcdcdc,#fafafa);box-sizing:border-box;"></div>
<div style="position:absolute;left:0px;top:419px;width:238px;height:18px;background:#dcdcdc;"></div>
<div class="t" style="left:-1px;top:421px;font-size:11.5px;color:#000;">Identity Data</div>
<svg style="position:absolute;left:222px;top:419px;" width="12" height="18" viewBox="222 419 12 18"><path d="M225 427 L228 424 L231 427 M225 431 L228 428 L231 431" stroke="#111" stroke-width="1.3" fill="none"/></svg>
<div style="position:absolute;left:0px;top:437px;width:238px;height:18px;background:#fff;border-bottom:1px dotted #8a8a8a;box-sizing:border-box;"></div>
<div style="position:absolute;left:115px;top:437px;width:1px;height:18px;border-left:1px dotted #8a8a8a;"></div>
<div style="position:absolute;left:237px;top:437px;width:1px;height:18px;border-left:1px dotted #8a8a8a;"></div>
<div class="t" style="left:4px;top:438px;font-size:11.5px;color:#000;">OmniClass Number</div>
<div style="position:absolute;left:0px;top:455px;width:238px;height:18px;background:#fff;border-bottom:1px dotted #8a8a8a;box-sizing:border-box;"></div>
<div style="position:absolute;left:115px;top:455px;width:1px;height:18px;border-left:1px dotted #8a8a8a;"></div>
<div style="position:absolute;left:237px;top:455px;width:1px;height:18px;border-left:1px dotted #8a8a8a;"></div>
<div class="t" style="left:4px;top:456px;font-size:11.5px;color:#909090;">OmniClass Title</div>
<div style="position:absolute;left:0px;top:473px;width:238px;height:18px;background:#dcdcdc;"></div>
<div class="t" style="left:0px;top:475px;font-size:11.5px;color:#000;">Other</div>
<svg style="position:absolute;left:222px;top:473px;" width="12" height="18" viewBox="222 473 12 18"><path d="M225 481 L228 478 L231 481 M225 485 L228 482 L231 485" stroke="#111" stroke-width="1.3" fill="none"/></svg>
<div style="position:absolute;left:0px;top:491px;width:238px;height:18px;background:#fff;border-bottom:1px dotted #8a8a8a;box-sizing:border-box;"></div>
<div style="position:absolute;left:115px;top:491px;width:1px;height:18px;border-left:1px dotted #8a8a8a;"></div>
<div style="position:absolute;left:237px;top:491px;width:1px;height:18px;border-left:1px dotted #8a8a8a;"></div>
<div class="t" style="left:4px;top:492px;font-size:11.5px;color:#000;">Always vertical</div>
<div style="position:absolute;left:119px;top:494px;width:12px;height:12px;border:1px solid #8c8c8c;background:linear-gradient(135deg,#dcdcdc,#fafafa);box-sizing:border-box;"></div>
<div style="position:absolute;left:0px;top:509px;width:238px;height:18px;background:#fff;border-bottom:1px dotted #8a8a8a;box-sizing:border-box;"></div>
<div style="position:absolute;left:115px;top:509px;width:1px;height:18px;border-left:1px dotted #8a8a8a;"></div>
<div style="position:absolute;left:237px;top:509px;width:1px;height:18px;border-left:1px dotted #8a8a8a;"></div>
<div class="t" style="left:4px;top:510px;font-size:11.5px;color:#000;">Cut with Voids Wh...</div>
<div style="position:absolute;left:119px;top:512px;width:12px;height:12px;border:1px solid #8c8c8c;background:linear-gradient(135deg,#dcdcdc,#fafafa);box-sizing:border-box;"></div>
<div style="position:absolute;left:0px;top:527px;width:238px;height:18px;background:#fff;border-bottom:1px dotted #8a8a8a;box-sizing:border-box;"></div>
<div style="position:absolute;left:115px;top:527px;width:1px;height:18px;border-left:1px dotted #8a8a8a;"></div>
<div style="position:absolute;left:237px;top:527px;width:1px;height:18px;border-left:1px dotted #8a8a8a;"></div>
<div class="t" style="left:4px;top:528px;font-size:11.5px;color:#000;">Shared</div>
<div style="position:absolute;left:119px;top:530px;width:12px;height:12px;border:1px solid #8c8c8c;background:linear-gradient(135deg,#dcdcdc,#fafafa);box-sizing:border-box;"></div>
<div style="position:absolute;left:0px;top:545px;width:238px;height:104px;background:#fff;"></div>
<div style="position:absolute;left:0px;top:649px;width:238px;height:27px;background:#f0f0f0;"></div>
<div class="t" style="left:-1px;top:655px;font-size:11.5px;color:#0a5bd0;text-decoration:underline;">Properties help</div>
<div style="position:absolute;left:163px;top:652px;width:73px;height:21px;border:1px solid #a6abb2;border-radius:3px;background:#f4f4f4;box-sizing:border-box;"></div>
<div class="t" style="left:184px;top:656px;font-size:11.5px;color:#909090;">Apply</div>
<div style="position:absolute;left:0px;top:679px;width:242px;height:1px;background:#3a3a3a;"></div>
<div style="position:absolute;left:0px;top:680px;width:242px;height:5px;background:#ececec;"></div>
<div style="position:absolute;left:0px;top:685px;width:242px;height:457px;background:#d6e3f0;"></div>
<div style="position:absolute;left:0px;top:685px;width:242px;height:1px;background:#505050;"></div>
<div style="position:absolute;left:0px;top:686px;width:242px;height:21px;background:linear-gradient(180deg,#bccadb 0%,#cfdcea 60%,#d8e4f0 100%);"></div>
<div class="t" style="left:-8px;top:690px;font-size:11.5px;color:#1e2a3a;">Family1.rfa - Project Browser</div>
<div style="position:absolute;left:224px;top:691px;width:14px;height:14px;border:1px solid #7f8fae;border-radius:2px;background:linear-gradient(180deg,#d0dcea,#c4d2e4);box-sizing:border-box;"></div><svg style="position:absolute;left:224px;top:691px;" width="14" height="14" viewBox="224 691 14 14"><path d="M228.5 695.5 L233.5 700.5 M233.5 695.5 L228.5 700.5" stroke="#2a2a3a" stroke-width="3.8" stroke-linecap="round"/><path d="M228.5 695.5 L233.5 700.5 M233.5 695.5 L228.5 700.5" stroke="#fff" stroke-width="1.8" stroke-linecap="round"/></svg>
<div style="position:absolute;left:0px;top:707px;width:238px;height:1px;background:#707070;"></div>
<div style="position:absolute;left:0px;top:708px;width:238px;height:434px;background:#fff;"></div>
<div style="position:absolute;left:33px;top:709px;width:59px;height:18px;background:#e2e2e2;"></div>
<div class="t" style="left:36px;top:711px;font-size:11.5px;color:#000;">Views (all)</div>
<div class="t" style="left:40px;top:729px;font-size:11.5px;color:#000;">Floor Plans</div>
<div class="t" style="left:60px;top:747px;font-size:11.5px;color:#000;">Lower Ref. Level</div>
<div class="t" style="left:60px;top:765px;font-size:11.5px;color:#000;">Upper Ref. Level</div>
<div class="t" style="left:40px;top:783px;font-size:11.5px;color:#000;">Ceiling Plans</div>
<div class="t" style="left:60px;top:801px;font-size:11.5px;color:#000;">Lower Ref. Level</div>
<div class="t" style="left:60px;top:819px;font-size:11.5px;color:#000;">Upper Ref. Level</div>
<div class="t" style="left:40px;top:837px;font-size:11.5px;color:#000;">3D Views</div>
<div class="t" style="left:60px;top:855px;font-size:11.5px;color:#000;">View 1</div>
<div class="t" style="left:40px;top:873px;font-size:11.5px;color:#000;">Elevations (Elevation 1)</div>
<div class="t" style="left:60px;top:891px;font-size:11.5px;color:#000;">Back</div>
<div class="t" style="left:60px;top:909px;font-size:11.5px;color:#000;">Front</div>
<div class="t" style="left:60px;top:927px;font-size:11.5px;color:#000;">Left</div>
<div class="t" style="left:60px;top:945px;font-size:11.5px;color:#000;font-weight:bold;">Right</div>
<div class="t" style="left:36px;top:963px;font-size:11.5px;color:#000;">Sheets (all)</div>
<div class="t" style="left:36px;top:981px;font-size:11.5px;color:#000;">Families</div>
<div class="t" style="left:36px;top:999px;font-size:11.5px;color:#000;">Groups</div>
<div class="t" style="left:36px;top:1017px;font-size:11.5px;color:#000;">Revit Links</div>
<svg style="position:absolute;left:0px;top:708px;" width="238" height="434" viewBox="0 708 238 434"><line x1="2.5" y1="726" x2="2.5" y2="1024" stroke="#a0a0a0" stroke-dasharray="1 1"/><line x1="22.5" y1="726" x2="22.5" y2="880" stroke="#a0a0a0" stroke-dasharray="1 1"/><line x1="42.5" y1="745" x2="42.5" y2="773" stroke="#a0a0a0" stroke-dasharray="1 1"/><line x1="42.5" y1="799" x2="42.5" y2="827" stroke="#a0a0a0" stroke-dasharray="1 1"/><line x1="42.5" y1="853" x2="42.5" y2="863" stroke="#a0a0a0" stroke-dasharray="1 1"/><line x1="42.5" y1="889" x2="42.5" y2="953" stroke="#a0a0a0" stroke-dasharray="1 1"/><rect x="-3.5" y="714.5" width="8" height="8" rx="1" fill="#f4f4f4" stroke="#9a9a9a"/><line x1="-2" y1="718.5" x2="3" y2="718.5" stroke="#3040a0"/><line x1="7" y1="718.5" x2="14" y2="718.5" stroke="#a0a0a0" stroke-dasharray="1 1"/><rect x="18.5" y="732.5" width="8" height="8" rx="1" fill="#f4f4f4" stroke="#9a9a9a"/><line x1="20" y1="736.5" x2="25" y2="736.5" stroke="#3040a0"/><line x1="28" y1="736.5" x2="37" y2="736.5" stroke="#a0a0a0" stroke-dasharray="1 1"/><line x1="43" y1="754.5" x2="57" y2="754.5" stroke="#a0a0a0" stroke-dasharray="1 1"/><line x1="43" y1="772.5" x2="57" y2="772.5" stroke="#a0a0a0" stroke-dasharray="1 1"/><rect x="18.5" y="786.5" width="8" height="8" rx="1" fill="#f4f4f4" stroke="#9a9a9a"/><line x1="20" y1="790.5" x2="25" y2="790.5" stroke="#3040a0"/><line x1="28" y1="790.5" x2="37" y2="790.5" stroke="#a0a0a0" stroke-dasharray="1 1"/><line x1="43" y1="808.5" x2="57" y2="808.5" stroke="#a0a0a0" stroke-dasharray="1 1"/><line x1="43" y1="826.5" x2="57" y2="826.5" stroke="#a0a0a0" stroke-dasharray="1 1"/><rect x="18.5" y="840.5" width="8" height="8" rx="1" fill="#f4f4f4" stroke="#9a9a9a"/><line x1="20" y1="844.5" x2="25" y2="844.5" stroke="#3040a0"/><line x1="28" y1="844.5" x2="37" y2="844.5" stroke="#a0a0a0" stroke-dasharray="1 1"/><line x1="43" y1="862.5" x2="57" y2="862.5" stroke="#a0a0a0" stroke-dasharray="1 1"/><rect x="18.5" y="876.5" width="8" height="8" rx="1" fill="#f4f4f4" stroke="#9a9a9a"/><line x1="20" y1="880.5" x2="25" y2="880.5" stroke="#3040a0"/><line x1="28" y1="880.5" x2="37" y2="880.5" stroke="#a0a0a0" stroke-dasharray="1 1"/><line x1="43" y1="898.5" x2="57" y2="898.5" stroke="#a0a0a0" stroke-dasharray="1 1"/><line x1="43" y1="916.5" x2="57" y2="916.5" stroke="#a0a0a0" stroke-dasharray="1 1"/><line x1="43" y1="934.5" x2="57" y2="934.5" stroke="#a0a0a0" stroke-dasharray="1 1"/><line x1="43" y1="952.5" x2="57" y2="952.5" stroke="#a0a0a0" stroke-dasharray="1 1"/><line x1="3" y1="970.5" x2="14" y2="970.5" stroke="#a0a0a0" stroke-dasharray="1 1"/><line x1="3" y1="988.5" x2="14" y2="988.5" stroke="#a0a0a0" stroke-dasharray="1 1"/><rect x="-3.5" y="984.5" width="8" height="8" rx="1" fill="#f4f4f4" stroke="#9a9a9a"/><line x1="-2" y1="988.5" x2="3" y2="988.5" stroke="#3040a0"/><line x1="0.5" y1="986" x2="0.5" y2="991" stroke="#3040a0"/><line x1="3" y1="1006.5" x2="14" y2="1006.5" stroke="#a0a0a0" stroke-dasharray="1 1"/><rect x="-3.5" y="1002.5" width="8" height="8" rx="1" fill="#f4f4f4" stroke="#9a9a9a"/><line x1="-2" y1="1006.5" x2="3" y2="1006.5" stroke="#3040a0"/><line x1="0.5" y1="1004" x2="0.5" y2="1009" stroke="#3040a0"/><line x1="3" y1="1024.5" x2="14" y2="1024.5" stroke="#a0a0a0" stroke-dasharray="1 1"/>
<g fill="none" stroke="#222" stroke-width="1">
<path d="M15.5 714 V711.5 H18 M26 711.5 H28.5 V714 M28.5 722 V724.5 H26 M18 724.5 H15.5 V722"/>
<path d="M19.5 715.5 L21.5 713.5 H25.5 V720 L23.5 722 H19.5Z" fill="#dde"/>
<path d="M14.5 963.5 H25 L29.5 968 V975.5 H14.5Z" fill="#f0f0f2" stroke="#2a2f38"/><path d="M25 963.5 V968 H29.5" fill="#fff" stroke="#2a2f38" stroke-width="0.8"/><path d="M17 974 V966.5 H23.5 V973 M20 974 V969.5 H23.5 M26.5 969.5 V974" stroke="#7a8aa0" fill="none"/><rect x="16.5" y="971.5" width="2" height="2" fill="none" stroke="#7a8aa0" stroke-width="0.8"/>
<path d="M15.5 981.5 H21 V988.5 H15.5Z M15.5 990 H21.5 L22.5 989 V981.5 H28.5 V995.5 H15.5Z" fill="#e6e8ec" stroke="#2a2f38"/>
<path d="M17 999.5 H15.5 V1012.5 H17 M27 999.5 H28.5 V1012.5 H27" stroke="#444"/><circle cx="21" cy="1005" r="3.5" fill="#ccc" stroke="#555"/><rect x="21" y="1003.5" width="5.5" height="6" fill="#ddd" stroke="#555"/>
</g>
<g fill="none" stroke="#8a6a00" stroke-width="3"><rect x="14.5" y="1021" width="8" height="6" rx="3"/><rect x="21.5" y="1021" width="8" height="6" rx="3"/></g><g fill="none" stroke="#f0c020" stroke-width="1.4"><rect x="14.5" y="1021" width="8" height="6" rx="3"/><rect x="21.5" y="1021" width="8" height="6" rx="3"/></g>
</svg>
<div style="position:absolute;left:250px;top:192px;width:669px;height:490px;background:#d6e3f0;"></div><div style="position:absolute;left:250px;top:192px;width:669px;height:31px;background:linear-gradient(180deg,#bac9da 0%,#c9d7e6 50%,#d6e3f0 100%);"></div><div style="position:absolute;left:250px;top:192px;width:669px;height:1px;background:#3a3a3a;"></div><div style="position:absolute;left:250px;top:192px;width:2px;height:490px;background:#4a4a4a;"></div><div style="position:absolute;left:251px;top:193px;width:668px;height:1px;background:#f4f8fc;opacity:0.6;"></div><svg style="position:absolute;left:261px;top:203px;" width="17" height="17" viewBox="261 203 17 17"><defs><linearGradient id="rg261203" x1="0" y1="0" x2="1" y2="0"><stop offset="0" stop-color="#b8b8b8"/><stop offset="0.6" stop-color="#e8e8e8"/><stop offset="1" stop-color="#9a9a9a"/></linearGradient></defs>
<path d="M261.8 203.8 H272 L276.2 208 V218.2 H261.8Z" fill="#fff" stroke="#a0309a" stroke-width="1.4"/>
<path d="M262.5 204.5 H271.5 L275.5 208.5 V211 H262.5Z" fill="url(#rg261203)"/><path d="M271.5 204 L276 208.5 H271.5Z" fill="#a0309a"/>
<text x="263.5" y="217" font-size="7.5" font-weight="bold" font-family="Liberation Sans" fill="#000" textLength="11" lengthAdjust="spacingAndGlyphs">RVT</text></svg><div class="t" style="left:281px;top:205px;font-size:11.5px;color:#2e3450;">Floor Plan: Upper Ref. Level - Family1.rfa</div><div style="position:absolute;left:812px;top:203px;width:30px;height:17px;border:1px solid #7d8ba8;border-radius:3px;background:linear-gradient(180deg,#c7d3e2 0%,#c3d0e0 100%);box-sizing:border-box;"></div><div style="position:absolute;left:845px;top:203px;width:30px;height:17px;border:1px solid #7d8ba8;border-radius:3px;background:linear-gradient(180deg,#c7d3e2 0%,#c3d0e0 100%);box-sizing:border-box;"></div><div style="position:absolute;left:879px;top:203px;width:30px;height:17px;border:1px solid #7d8ba8;border-radius:3px;background:linear-gradient(180deg,#c7d3e2 0%,#c3d0e0 100%);box-sizing:border-box;"></div><svg style="position:absolute;left:812px;top:203px;" width="97" height="17" viewBox="812 203 97 17"><rect x="822" y="212" width="10" height="4" rx="1" fill="#f4f4f4" stroke="#333" stroke-width="1"/><rect x="855.5" y="207.5" width="9" height="8" rx="1" fill="#f4f4f4" stroke="#333" stroke-width="1"/><rect x="858" y="210" width="4" height="3" fill="#8aa0c0"/><path d="M890 207 L898 215 M898 207 L890 215" stroke="#333" stroke-width="3.6" stroke-linecap="round"/><path d="M890 207 L898 215 M898 207 L890 215" stroke="#fff" stroke-width="1.8" stroke-linecap="round"/></svg><div style="position:absolute;left:259px;top:224px;width:651px;height:451px;background:#fff;"></div><div style="position:absolute;left:259px;top:224px;width:651px;height:1px;background:#6c6c6c;"></div><div style="position:absolute;left:259px;top:224px;width:1px;height:451px;background:#6c6c6c;"></div><div style="position:absolute;left:260px;top:225px;width:1px;height:450px;background:#c8c8c8;"></div>
<div style="position:absolute;left:250px;top:682px;width:669px;height:460px;background:#d6e3f0;"></div><div style="position:absolute;left:250px;top:682px;width:669px;height:31px;background:linear-gradient(180deg,#bac9da 0%,#c9d7e6 50%,#d6e3f0 100%);"></div><div style="position:absolute;left:250px;top:682px;width:669px;height:1px;background:#3a3a3a;"></div><div style="position:absolute;left:250px;top:682px;width:2px;height:460px;background:#4a4a4a;"></div><div style="position:absolute;left:251px;top:683px;width:668px;height:1px;background:#f4f8fc;opacity:0.6;"></div><svg style="position:absolute;left:261px;top:693px;" width="17" height="17" viewBox="261 693 17 17"><defs><linearGradient id="rg261693" x1="0" y1="0" x2="1" y2="0"><stop offset="0" stop-color="#b8b8b8"/><stop offset="0.6" stop-color="#e8e8e8"/><stop offset="1" stop-color="#9a9a9a"/></linearGradient></defs>
<path d="M261.8 693.8 H272 L276.2 698 V708.2 H261.8Z" fill="#fff" stroke="#a0309a" stroke-width="1.4"/>
<path d="M262.5 694.5 H271.5 L275.5 698.5 V701 H262.5Z" fill="url(#rg261693)"/><path d="M271.5 694 L276 698.5 H271.5Z" fill="#a0309a"/>
<text x="263.5" y="707" font-size="7.5" font-weight="bold" font-family="Liberation Sans" fill="#000" textLength="11" lengthAdjust="spacingAndGlyphs">RVT</text></svg><div class="t" style="left:281px;top:695px;font-size:11.5px;color:#2e3450;">Elevation: Back - Family1.rfa</div><div style="position:absolute;left:812px;top:693px;width:30px;height:17px;border:1px solid #7d8ba8;border-radius:3px;background:linear-gradient(180deg,#c7d3e2 0%,#c3d0e0 100%);box-sizing:border-box;"></div><div style="position:absolute;left:845px;top:693px;width:30px;height:17px;border:1px solid #7d8ba8;border-radius:3px;background:linear-gradient(180deg,#c7d3e2 0%,#c3d0e0 100%);box-sizing:border-box;"></div><div style="position:absolute;left:879px;top:693px;width:30px;height:17px;border:1px solid #7d8ba8;border-radius:3px;background:linear-gradient(180deg,#c7d3e2 0%,#c3d0e0 100%);box-sizing:border-box;"></div><svg style="position:absolute;left:812px;top:693px;" width="97" height="17" viewBox="812 693 97 17"><rect x="822" y="702" width="10" height="4" rx="1" fill="#f4f4f4" stroke="#333" stroke-width="1"/><rect x="855.5" y="697.5" width="9" height="8" rx="1" fill="#f4f4f4" stroke="#333" stroke-width="1"/><rect x="858" y="700" width="4" height="3" fill="#8aa0c0"/><path d="M890 697 L898 705 M898 697 L890 705" stroke="#333" stroke-width="3.6" stroke-linecap="round"/><path d="M890 697 L898 705 M898 697 L890 705" stroke="#fff" stroke-width="1.8" stroke-linecap="round"/></svg><div style="position:absolute;left:259px;top:713px;width:651px;height:429px;background:#fff;"></div><div style="position:absolute;left:259px;top:713px;width:651px;height:1px;background:#6c6c6c;"></div><div style="position:absolute;left:259px;top:713px;width:1px;height:429px;background:#6c6c6c;"></div><div style="position:absolute;left:260px;top:714px;width:1px;height:428px;background:#c8c8c8;"></div>
<div style="position:absolute;left:918px;top:192px;width:1px;height:950px;background:#1a1a1a;"></div>
<div style="position:absolute;left:919px;top:192px;width:640px;height:326px;background:#b7d0ea;"></div><div style="position:absolute;left:919px;top:192px;width:640px;height:31px;background:linear-gradient(180deg,#98b3d3 0%,#a7c0dd 40%,#b9d0ea 100%);"></div><div style="position:absolute;left:919px;top:192px;width:640px;height:1px;background:#3a3a3a;"></div><div style="position:absolute;left:920px;top:192px;width:1px;height:326px;background:#f0f6fc;"></div><div style="position:absolute;left:920px;top:193px;width:639px;height:1px;background:#f4f8fc;opacity:0.6;"></div><svg style="position:absolute;left:929px;top:203px;" width="17" height="17" viewBox="929 203 17 17"><defs><linearGradient id="rg929203" x1="0" y1="0" x2="1" y2="0"><stop offset="0" stop-color="#b8b8b8"/><stop offset="0.6" stop-color="#e8e8e8"/><stop offset="1" stop-color="#9a9a9a"/></linearGradient></defs>
<path d="M929.8 203.8 H940 L944.2 208 V218.2 H929.8Z" fill="#fff" stroke="#a0309a" stroke-width="1.4"/>
<path d="M930.5 204.5 H939.5 L943.5 208.5 V211 H930.5Z" fill="url(#rg929203)"/><path d="M939.5 204 L944 208.5 H939.5Z" fill="#a0309a"/>
<text x="931.5" y="217" font-size="7.5" font-weight="bold" font-family="Liberation Sans" fill="#000" textLength="11" lengthAdjust="spacingAndGlyphs">RVT</text></svg><div class="t" style="left:949px;top:205px;font-size:11.5px;color:#2e3450;">Elevation: Right - Family1.rfa</div><div style="position:absolute;left:1481px;top:203px;width:30px;height:17px;border:1px solid #4e5f7a;border-radius:3px;background:linear-gradient(180deg,#c2d4ea 0%,#b3c8e2 50%,#98b3d2 51%,#b4cbe6 100%);box-sizing:border-box;box-shadow:inset 0 0 0 1px #dfeaf6;"></div><div style="position:absolute;left:1514px;top:203px;width:30px;height:17px;border:1px solid #4e5f7a;border-radius:3px;background:linear-gradient(180deg,#c2d4ea 0%,#b3c8e2 50%,#98b3d2 51%,#b4cbe6 100%);box-sizing:border-box;box-shadow:inset 0 0 0 1px #dfeaf6;"></div><div style="position:absolute;left:1546px;top:203px;width:30px;height:17px;border:1px solid #5a1a1a;border-radius:3px;background:linear-gradient(180deg,#e9a394 0%,#d98570 50%,#c3401f 51%,#d56a50 100%);box-sizing:border-box;"></div><svg style="position:absolute;left:1481px;top:203px;" width="95" height="17" viewBox="1481 203 95 17"><rect x="1491" y="212" width="10" height="4" rx="1" fill="#f4f4f4" stroke="#333" stroke-width="1"/><rect x="1524.5" y="207.5" width="9" height="8" rx="1" fill="#f4f4f4" stroke="#333" stroke-width="1"/><rect x="1527" y="210" width="4" height="3" fill="#8aa0c0"/><path d="M1557 207 L1565 215 M1565 207 L1557 215" stroke="#333" stroke-width="3.6" stroke-linecap="round"/><path d="M1557 207 L1565 215 M1565 207 L1557 215" stroke="#fff" stroke-width="1.8" stroke-linecap="round"/></svg><div style="position:absolute;left:927px;top:224px;width:632px;height:286px;background:#fff;"></div><div style="position:absolute;left:927px;top:224px;width:632px;height:1px;background:#6c6c6c;"></div><div style="position:absolute;left:927px;top:224px;width:1px;height:286px;background:#6c6c6c;"></div><div style="position:absolute;left:928px;top:225px;width:1px;height:285px;background:#c8c8c8;"></div>
<div style="position:absolute;left:919px;top:517px;width:640px;height:1px;background:#20c8e8;"></div>
<div style="position:absolute;left:919px;top:518px;width:640px;height:1px;background:#000;"></div>
<div style="position:absolute;left:919px;top:519px;width:640px;height:325px;background:#b7d0ea;"></div><div style="position:absolute;left:919px;top:519px;width:640px;height:31px;background:linear-gradient(180deg,#98b3d3 0%,#a7c0dd 40%,#b9d0ea 100%);"></div><div style="position:absolute;left:919px;top:519px;width:640px;height:1px;background:#3a3a3a;"></div><div style="position:absolute;left:920px;top:519px;width:1px;height:325px;background:#f0f6fc;"></div><div style="position:absolute;left:920px;top:520px;width:639px;height:1px;background:#f4f8fc;opacity:0.6;"></div><svg style="position:absolute;left:929px;top:530px;" width="17" height="17" viewBox="929 530 17 17"><defs><linearGradient id="rg929530" x1="0" y1="0" x2="1" y2="0"><stop offset="0" stop-color="#b8b8b8"/><stop offset="0.6" stop-color="#e8e8e8"/><stop offset="1" stop-color="#9a9a9a"/></linearGradient></defs>
<path d="M929.8 530.8 H940 L944.2 535 V545.2 H929.8Z" fill="#fff" stroke="#a0309a" stroke-width="1.4"/>
<path d="M930.5 531.5 H939.5 L943.5 535.5 V538 H930.5Z" fill="url(#rg929530)"/><path d="M939.5 531 L944 535.5 H939.5Z" fill="#a0309a"/>
<text x="931.5" y="544" font-size="7.5" font-weight="bold" font-family="Liberation Sans" fill="#000" textLength="11" lengthAdjust="spacingAndGlyphs">RVT</text></svg><div class="t" style="left:949px;top:532px;font-size:11.5px;color:#2e3450;">3D View: View 1 - Family1.rfa</div><div style="position:absolute;left:1481px;top:530px;width:30px;height:17px;border:1px solid #4e5f7a;border-radius:3px;background:linear-gradient(180deg,#c2d4ea 0%,#b3c8e2 50%,#98b3d2 51%,#b4cbe6 100%);box-sizing:border-box;box-shadow:inset 0 0 0 1px #dfeaf6;"></div><div style="position:absolute;left:1514px;top:530px;width:30px;height:17px;border:1px solid #4e5f7a;border-radius:3px;background:linear-gradient(180deg,#c2d4ea 0%,#b3c8e2 50%,#98b3d2 51%,#b4cbe6 100%);box-sizing:border-box;box-shadow:inset 0 0 0 1px #dfeaf6;"></div><div style="position:absolute;left:1546px;top:530px;width:30px;height:17px;border:1px solid #5a1a1a;border-radius:3px;background:linear-gradient(180deg,#e9a394 0%,#d98570 50%,#c3401f 51%,#d56a50 100%);box-sizing:border-box;"></div><svg style="position:absolute;left:1481px;top:530px;" width="95" height="17" viewBox="1481 530 95 17"><rect x="1491" y="539" width="10" height="4" rx="1" fill="#f4f4f4" stroke="#333" stroke-width="1"/><rect x="1524.5" y="534.5" width="9" height="8" rx="1" fill="#f4f4f4" stroke="#333" stroke-width="1"/><rect x="1527" y="537" width="4" height="3" fill="#8aa0c0"/><path d="M1557 534 L1565 542 M1565 534 L1557 542" stroke="#333" stroke-width="3.6" stroke-linecap="round"/><path d="M1557 534 L1565 542 M1565 534 L1557 542" stroke="#fff" stroke-width="1.8" stroke-linecap="round"/></svg><div style="position:absolute;left:927px;top:549px;width:632px;height:287px;background:#fff;"></div><div style="position:absolute;left:927px;top:549px;width:632px;height:1px;background:#6c6c6c;"></div><div style="position:absolute;left:927px;top:549px;width:1px;height:287px;background:#6c6c6c;"></div><div style="position:absolute;left:928px;top:550px;width:1px;height:286px;background:#c8c8c8;"></div>
<div style="position:absolute;left:919px;top:843px;width:640px;height:1px;background:#20c8e8;"></div>
<div style="position:absolute;left:919px;top:844px;width:640px;height:1px;background:#000;"></div>
<div style="position:absolute;left:919px;top:845px;width:640px;height:297px;background:#d6e3f0;"></div><div style="position:absolute;left:919px;top:845px;width:640px;height:31px;background:linear-gradient(180deg,#bac9da 0%,#c9d7e6 50%,#d6e3f0 100%);"></div><div style="position:absolute;left:919px;top:845px;width:640px;height:1px;background:#3a3a3a;"></div><div style="position:absolute;left:920px;top:845px;width:1px;height:297px;background:#f0f6fc;"></div><div style="position:absolute;left:920px;top:846px;width:639px;height:1px;background:#f4f8fc;opacity:0.6;"></div><svg style="position:absolute;left:929px;top:855px;" width="17" height="17" viewBox="929 855 17 17"><defs><linearGradient id="rg929855" x1="0" y1="0" x2="1" y2="0"><stop offset="0" stop-color="#b8b8b8"/><stop offset="0.6" stop-color="#e8e8e8"/><stop offset="1" stop-color="#9a9a9a"/></linearGradient></defs>
<path d="M929.8 855.8 H940 L944.2 860 V870.2 H929.8Z" fill="#fff" stroke="#a0309a" stroke-width="1.4"/>
<path d="M930.5 856.5 H939.5 L943.5 860.5 V863 H930.5Z" fill="url(#rg929855)"/><path d="M939.5 856 L944 860.5 H939.5Z" fill="#a0309a"/>
<text x="931.5" y="869" font-size="7.5" font-weight="bold" font-family="Liberation Sans" fill="#000" textLength="11" lengthAdjust="spacingAndGlyphs">RVT</text></svg><div class="t" style="left:949px;top:857px;font-size:11.5px;color:#2e3450;">3D View: {3D} - Project1</div><div style="position:absolute;left:1481px;top:856px;width:30px;height:17px;border:1px solid #7d8ba8;border-radius:3px;background:linear-gradient(180deg,#c7d3e2 0%,#c3d0e0 100%);box-sizing:border-box;"></div><div style="position:absolute;left:1514px;top:856px;width:30px;height:17px;border:1px solid #7d8ba8;border-radius:3px;background:linear-gradient(180deg,#c7d3e2 0%,#c3d0e0 100%);box-sizing:border-box;"></div><div style="position:absolute;left:1546px;top:856px;width:30px;height:17px;border:1px solid #7d8ba8;border-radius:3px;background:linear-gradient(180deg,#c7d3e2 0%,#c3d0e0 100%);box-sizing:border-box;"></div><svg style="position:absolute;left:1481px;top:856px;" width="95" height="17" viewBox="1481 856 95 17"><rect x="1491" y="865" width="10" height="4" rx="1" fill="#f4f4f4" stroke="#333" stroke-width="1"/><rect x="1524.5" y="860.5" width="9" height="8" rx="1" fill="#f4f4f4" stroke="#333" stroke-width="1"/><rect x="1527" y="863" width="4" height="3" fill="#8aa0c0"/><path d="M1557 860 L1565 868 M1565 860 L1557 868" stroke="#333" stroke-width="3.6" stroke-linecap="round"/><path d="M1557 860 L1565 868 M1565 860 L1557 868" stroke="#fff" stroke-width="1.8" stroke-linecap="round"/></svg><div style="position:absolute;left:927px;top:876px;width:632px;height:266px;background:#fff;"></div><div style="position:absolute;left:927px;top:876px;width:632px;height:1px;background:#6c6c6c;"></div><div style="position:absolute;left:927px;top:876px;width:1px;height:266px;background:#6c6c6c;"></div><div style="position:absolute;left:928px;top:877px;width:1px;height:265px;background:#c8c8c8;"></div>
<svg style="position:absolute;left:261px;top:225px;" width="632" height="432" viewBox="261 225 632 432"><rect x="302.5" y="234.5" width="379" height="379" fill="#00c000" stroke="#000" stroke-width="1.4"/><rect x="388" y="335" width="208" height="178" fill="#a4a4a4"/><path d="M594.5 343 L594.5 509 L496 509 Z" fill="#5a5a5a"/><path d="M593 340 L594.5 343 L496 509 L494 509 Z" fill="#7a7a7a"/><rect x="388.5" y="335.5" width="207" height="177" fill="none" stroke="#333" stroke-width="1"/><rect x="390.5" y="337.5" width="203" height="172" fill="none" stroke="#111" stroke-width="1"/><path d="M391 339 L490 510 M394 338 L492 507 M398 338 L495 506" stroke="#111" stroke-width="0.9" fill="none"/><path d="M590.5 338 L492.5 506 M593.5 341 L494.5 509 M594 346 L497 509" stroke="#111" stroke-width="0.9" fill="none"/><rect x="391" y="510" width="202" height="3" fill="#9a9a9a"/><rect x="494" y="510" width="100" height="3" fill="#5a5a5a"/><line x1="491.5" y1="229" x2="491.5" y2="662" stroke="#008000" stroke-width="1.1" stroke-dasharray="9 9" stroke-dashoffset="0"/><line x1="387.5" y1="279" x2="387.5" y2="630" stroke="#1f5a1f" stroke-width="1.1" stroke-dasharray="9 9" stroke-dashoffset="0"/><line x1="596.5" y1="274" x2="596.5" y2="630" stroke="#1f5a1f" stroke-width="1.1" stroke-dasharray="9 9" stroke-dashoffset="0"/><line x1="325" y1="334.5" x2="631" y2="334.5" stroke="#1f5a1f" stroke-width="1.1" stroke-dasharray="9 9" stroke-dashoffset="0"/><line x1="325" y1="513.5" x2="682" y2="513.5" stroke="#1f5a1f" stroke-width="1.1" stroke-dasharray="9 9" stroke-dashoffset="0"/><line x1="682" y1="513.5" x2="722" y2="513.5" stroke="#008000" stroke-width="1.1" stroke-dasharray="9 9" stroke-dashoffset="3"/><line x1="265" y1="423.5" x2="720" y2="423.5" stroke="#008000" stroke-width="1.1" stroke-dasharray="9 9" stroke-dashoffset="2"/><line x1="631" y1="334.5" x2="734" y2="334.5" stroke="#000" stroke-width="1.2"/><line x1="642.5" y1="334.5" x2="642.5" y2="513" stroke="#000" stroke-width="1.2"/><line x1="639.3" y1="331.3" x2="645.7" y2="337.7" stroke="#000" stroke-width="1.0"/><line x1="639.3" y1="509.8" x2="645.7" y2="516.2" stroke="#000" stroke-width="1.0"/><line x1="639.3" y1="420.3" x2="645.7" y2="426.7" stroke="#000" stroke-width="1.0"/><line x1="636" y1="513.5" x2="648" y2="513.5" stroke="#000" stroke-width="1.2"/><line x1="722" y1="513.5" x2="734" y2="513.5" stroke="#000" stroke-width="1.2"/><line x1="728.5" y1="334.5" x2="728.5" y2="513" stroke="#000" stroke-width="1.2"/><line x1="725.3" y1="331.3" x2="731.7" y2="337.7" stroke="#000" stroke-width="1.0"/><line x1="725.3" y1="509.8" x2="731.7" y2="516.2" stroke="#000" stroke-width="1.0"/><rect x="631" y="373" width="10" height="12" fill="#fff"/><text x="636.0" y="381.5" font-size="7" font-family="Liberation Mono" text-anchor="middle" transform="rotate(-90 636.0 379.0)">EQ</text><rect x="631" y="463" width="10" height="12" fill="#fff"/><text x="636.0" y="471.5" font-size="7" font-family="Liberation Mono" text-anchor="middle" transform="rotate(-90 636.0 469.0)">EQ</text><text x="722" y="426" font-size="8.5" font-weight="bold" font-family="Liberation Sans" text-anchor="middle" textLength="50" lengthAdjust="spacingAndGlyphs" transform="rotate(-90 722 423)">Length = 1440</text><line x1="381" y1="566" x2="602" y2="566" stroke="#000" stroke-width="1.2"/><line x1="387.5" y1="560" x2="387.5" y2="632" stroke="#000" stroke-width="1.2"/><line x1="596.5" y1="560" x2="596.5" y2="632" stroke="#000" stroke-width="1.2"/><line x1="384.3" y1="562.8" x2="390.7" y2="569.2" stroke="#000" stroke-width="1.0"/><line x1="488.3" y1="562.8" x2="494.7" y2="569.2" stroke="#000" stroke-width="1.0"/><line x1="593.3" y1="562.8" x2="599.7" y2="569.2" stroke="#000" stroke-width="1.0"/><rect x="433" y="555" width="10" height="9" fill="#fff"/><text x="438.0" y="562" font-size="7" font-family="Liberation Mono" text-anchor="middle">EQ</text><rect x="538" y="555" width="10" height="9" fill="#fff"/><text x="543.0" y="562" font-size="7" font-family="Liberation Mono" text-anchor="middle">EQ</text><line x1="381" y1="627.5" x2="602" y2="627.5" stroke="#000" stroke-width="1.2"/><line x1="384.3" y1="624.3" x2="390.7" y2="630.7" stroke="#000" stroke-width="1.0"/><line x1="593.3" y1="624.3" x2="599.7" y2="630.7" stroke="#000" stroke-width="1.0"/><text x="491" y="623.5" font-size="8" font-weight="bold" font-family="Liberation Sans" text-anchor="middle" textLength="48" lengthAdjust="spacingAndGlyphs">Width = 1680</text></svg>
<svg style="position:absolute;left:261px;top:714px;" width="632" height="428" viewBox="261 714 632 428"><line x1="421" y1="842.5" x2="692" y2="842.5" stroke="#008000" stroke-width="1.1" stroke-dasharray="9 9" stroke-dashoffset="3"/><line x1="477.5" y1="742" x2="477.5" y2="1150" stroke="#008000" stroke-width="1.1" stroke-dasharray="9 9" stroke-dashoffset="0"/><line x1="655.5" y1="742" x2="655.5" y2="1150" stroke="#008000" stroke-width="1.1" stroke-dasharray="9 9" stroke-dashoffset="0"/><line x1="566.5" y1="722" x2="566.5" y2="1150" stroke="#008000" stroke-width="1.1" stroke-dasharray="9 9" stroke-dashoffset="0"/><path d="M566.5 843 L655 984 L478 984Z" fill="#a0a0a0" stroke="#8a8a8a" stroke-width="1.5"/><path d="M566.5 853 L648 982 L485 982Z" fill="none" stroke="#111" stroke-width="1"/><rect x="479" y="981.5" width="175" height="3" fill="#c8c8c8" stroke="#222" stroke-width="0.8"/><rect x="404.5" y="985.5" width="324" height="15.5" fill="#00c000" stroke="#000" stroke-width="1.3"/><line x1="383" y1="1001.5" x2="404" y2="1001.5" stroke="#000" stroke-width="1.2"/><line x1="742" y1="1001.5" x2="755" y2="1001.5" stroke="#000" stroke-width="1.2"/><line x1="477.5" y1="985" x2="477.5" y2="1001" stroke="#008000" stroke-width="1.1" stroke-dasharray="9 9" stroke-dashoffset="0"/><line x1="566.5" y1="985" x2="566.5" y2="1001" stroke="#008000" stroke-width="1.1" stroke-dasharray="9 9" stroke-dashoffset="0"/><line x1="655.5" y1="985" x2="655.5" y2="1001" stroke="#008000" stroke-width="1.1" stroke-dasharray="9 9" stroke-dashoffset="0"/><text x="762" y="999" font-size="8.5" font-family="Liberation Sans" textLength="68" lengthAdjust="spacingAndGlyphs">Upper Ref. Level</text><text x="810" y="1008" font-size="8.5" font-family="Liberation Sans" textLength="19" lengthAdjust="spacingAndGlyphs">4000</text><line x1="806" y1="1001.5" x2="837" y2="1001.5" stroke="#000" stroke-width="1"/><line x1="777" y1="1001.5" x2="790" y2="1001.5" stroke="#000" stroke-width="1"/><circle cx="850.5" cy="1000.5" r="13" fill="#fff" stroke="#1040c0" stroke-width="1.2"/><path d="M850.5 1000.5 V987.5 A13 13 0 0 0 837.5 1000.5Z M850.5 1000.5 V1013.5 A13 13 0 0 0 863.5 1000.5Z" fill="#1040c0"/></svg>
<svg style="position:absolute;left:929px;top:225px;" width="630" height="267" viewBox="929 225 630 267"><line x1="942" y1="276.5" x2="1411" y2="276.5" stroke="#008000" stroke-width="1.1" stroke-dasharray="9 9" stroke-dashoffset="2"/><line x1="1109.5" y1="225" x2="1109.5" y2="492" stroke="#008000" stroke-width="1.1" stroke-dasharray="9 9" stroke-dashoffset="4"/><line x1="1181.5" y1="225" x2="1181.5" y2="492" stroke="#008000" stroke-width="1.1" stroke-dasharray="9 9" stroke-dashoffset="4"/><line x1="1253.5" y1="225" x2="1253.5" y2="492" stroke="#008000" stroke-width="1.1" stroke-dasharray="9 9" stroke-dashoffset="4"/><path d="M1110 277 L1252 410 L1110 410Z" fill="#b0b0b0" stroke="#8c8c8c" stroke-width="1.6"/><path d="M1113 285 L1243 407 L1113 407Z" fill="none" stroke="#111" stroke-width="1"/><line x1="1109.5" y1="277" x2="1109.5" y2="410" stroke="#222" stroke-width="1"/><rect x="1029.5" y="410.5" width="304" height="15" fill="#00c000" stroke="#000" stroke-width="1.3"/><line x1="1109.5" y1="411" x2="1109.5" y2="425" stroke="#008000" stroke-width="1.1" stroke-dasharray="9 9" stroke-dashoffset="4"/><line x1="1181.5" y1="411" x2="1181.5" y2="425" stroke="#008000" stroke-width="1.1" stroke-dasharray="9 9" stroke-dashoffset="4"/><line x1="1253.5" y1="411" x2="1253.5" y2="425" stroke="#008000" stroke-width="1.1" stroke-dasharray="9 9" stroke-dashoffset="4"/><line x1="979" y1="425.5" x2="989" y2="425.5" stroke="#000" stroke-width="1.2"/><line x1="998" y1="425.5" x2="999.5" y2="425.5" stroke="#000" stroke-width="1.2"/><line x1="1009" y1="425.5" x2="1021" y2="425.5" stroke="#000" stroke-width="1.2"/><line x1="1051.5" y1="276.5" x2="1051.5" y2="411" stroke="#000" stroke-width="1.2"/><line x1="1048.3" y1="273.3" x2="1054.7" y2="279.7" stroke="#000" stroke-width="1"/><line x1="1048.3" y1="407.8" x2="1054.7" y2="414.2" stroke="#000" stroke-width="1"/><text x="1046" y="345.5" font-size="7" font-family="Liberation Sans" text-anchor="middle" textLength="38" lengthAdjust="spacingAndGlyphs" transform="rotate(-90 1046 343)">Height = 1343</text><line x1="1078.5" y1="411" x2="1078.5" y2="468.5" stroke="#000" stroke-width="1.2"/><line x1="1073" y1="468.5" x2="1106" y2="468.5" stroke="#000" stroke-width="1.2"/><line x1="1075.3" y1="407.8" x2="1081.7" y2="414.2" stroke="#000" stroke-width="1"/><line x1="1075.3" y1="465.3" x2="1081.7" y2="471.7" stroke="#000" stroke-width="1"/><text x="1073" y="442.5" font-size="7" font-weight="bold" font-family="Liberation Sans" text-anchor="middle" transform="rotate(-90 1073 440)">500</text><line x1="1335" y1="425.5" x2="1348" y2="425.5" stroke="#000" stroke-width="1"/><line x1="1368" y1="425.5" x2="1381" y2="425.5" stroke="#000" stroke-width="1"/><line x1="1399" y1="425.5" x2="1412" y2="425.5" stroke="#000" stroke-width="1"/><text x="1342" y="424" font-size="8.5" font-family="Liberation Sans" textLength="64" lengthAdjust="spacingAndGlyphs">Upper Ref. Level</text><text x="1387" y="433" font-size="8.5" font-family="Liberation Sans" textLength="19" lengthAdjust="spacingAndGlyphs">4000</text><circle cx="1424.5" cy="425.5" r="13" fill="#fff" stroke="#1040c0" stroke-width="1.2"/><path d="M1424.5 425.5 V412.5 A13 13 0 0 0 1411.5 425.5Z M1424.5 425.5 V438.5 A13 13 0 0 0 1437.5 425.5Z" fill="#1040c0"/></svg>
<svg style="position:absolute;left:1520px;top:225px;" width="39" height="120" viewBox="1520 225 39 120"><rect x="1525.5" y="227.5" width="40" height="114" rx="5" fill="#f4f4f4" stroke="#a8a8a8"/><circle cx="1551" cy="232" r="3.5" fill="#e6e6e6" stroke="#aaa"/><path d="M1549.5 230.5 L1552.5 233.5 M1552.5 230.5 L1549.5 233.5" stroke="#aaa"/><path d="M1530.5 256 Q1530.5 247.5 1539 247.5 H1548.5 V256 Q1548.5 264.5 1539 264.5 Q1530.5 264.5 1530.5 256Z" fill="#ececec" stroke="#a8a8a8" stroke-width="1.1"/><circle cx="1539" cy="256" r="4.3" fill="#e4e6e8" stroke="#9a9a9a" stroke-width="1.1"/><text x="1542" y="270" font-size="9" font-weight="bold" fill="#5a8ec8" font-family="Liberation Sans">2D</text><path d="M1539 278 L1545 278 L1542 281Z M1539 319 L1545 319 L1542 322Z" fill="#888"/><line x1="1529" y1="283.5" x2="1559" y2="283.5" stroke="#c8c8c8"/><rect x="1534.5" y="292.5" width="10" height="9" fill="#b4d8a4" stroke="#88b078"/><circle cx="1542.5" cy="302" r="3.2" fill="#e8eef0" stroke="#707070" stroke-width="1.1"/><path d="M1545 304.5 L1548 307.5" stroke="#707070" stroke-width="1.5"/><circle cx="1551" cy="334" r="3.5" fill="#e6e6e6" stroke="#aaa"/><path d="M1549 334 H1553" stroke="#aaa"/></svg>
<svg style="position:absolute;left:929px;top:550px;" width="630" height="268" viewBox="929 550 630 268"><path d="M1080 744.5 L1241.5 740.5 L1241.5 748.5 L1080.5 753 Z" fill="#009a00" stroke="#000" stroke-width="1.2"/><path d="M1069.5 687.5 L1230.5 683.5 L1241.5 740.5 L1080 744.5 Z" fill="#007800" stroke="#000" stroke-width="1.3"/><path d="M1114.5 699 L1193.5 647 L1121.5 731 Z" fill="#939393" stroke="#111" stroke-width="1"/><path d="M1193.5 647 L1196.5 729.5 L1121.5 731 Z" fill="#bcbcbc" stroke="#111" stroke-width="1"/><path d="M1114.5 699 L1193.5 647" stroke="#1a1a1a" stroke-width="2.4" stroke-linecap="round"/><path d="M1114.5 699 L1193.5 647" stroke="#e8e8e8" stroke-width="0.8"/><path d="M1121.5 731 L1193.5 647" stroke="#1a1a1a" stroke-width="2.4" stroke-linecap="round"/><path d="M1121.5 731 L1193.5 647" stroke="#e8e8e8" stroke-width="0.8"/><path d="M1193.5 647 L1196.5 729.5" stroke="#1a1a1a" stroke-width="2.4" stroke-linecap="round"/><path d="M1193.5 647 L1196.5 729.5" stroke="#e8e8e8" stroke-width="0.8"/><path d="M1121.5 731 L1196.5 729.5" stroke="#1a1a1a" stroke-width="2.4" stroke-linecap="round"/><path d="M1121.5 731 L1196.5 729.5" stroke="#e8e8e8" stroke-width="0.8"/><path d="M1114.5 699 L1121.5 731" stroke="#1a1a1a" stroke-width="2.4" stroke-linecap="round"/><path d="M1114.5 699 L1121.5 731" stroke="#e8e8e8" stroke-width="0.8"/></svg>
<svg style="position:absolute;left:1520px;top:560px;" width="39" height="32" viewBox="1520 560 39 32"><ellipse cx="1538" cy="588" rx="11" ry="3" fill="#d8d8d8" opacity="0.6"/><path d="M1528.5 567 V562.5 H1545.5 L1547.5 565.5 V567Z" fill="#f0f0f0" stroke="#999" stroke-width="1"/><rect x="1528.5" y="567.5" width="19" height="18.5" fill="#ebebeb" stroke="#999" stroke-width="1"/><path d="M1527 567.5 H1548.5" stroke="#999" stroke-width="1.2"/><rect x="1532" y="571" width="12" height="11" fill="#e0e0e4"/><text x="1533" y="579" font-size="5" fill="#777" font-family="Liberation Sans">LEFT</text></svg>
<svg style="position:absolute;left:929px;top:877px;" width="630" height="265" viewBox="929 877 630 265"><path d="M1285.8 1026 L1541.8 1088 L1541.8 1102.3 L1288 1040.3 Z" fill="#004f00" stroke="#000" stroke-width="1"/><path d="M1285.8 1026 L1288 1040.3 L1063 1142 L1037 1142 Z" fill="#005000" stroke="#000" stroke-width="1"/><path d="M955.5 976 L955.5 991.5 L1022 1142 L1037 1142 Z" fill="#003c00" stroke="#000" stroke-width="1"/><path d="M955.5 976 L1168 877 L1221.4 877 L1285.8 1026 L1037 1142 Z" fill="#006f00" stroke="#000" stroke-width="1"/><path d="M1221.4 877 L1293 877 L1468 920 L1541.8 1088 L1285.8 1026 Z" fill="#00a400" stroke="#000" stroke-width="1"/><defs><linearGradient id="eg" x1="0" y1="0" x2="1" y2="1"><stop offset="0" stop-color="#00a000"/><stop offset="1" stop-color="#006800"/></linearGradient></defs><path d="M1366 1142 Q1440 1103 1580 1103 L1580 1150 L1366 1150Z" fill="url(#eg)" stroke="#000" stroke-width="1"/><path d="M1097.3 992.5 L1146 970.4 L1161.5 1000 L1111 1024 Z" fill="#005800"/><path d="M1103 1003 L1151 980 L1161.5 1000 L1111 1024 Z" fill="#fff"/><path d="M1111 1024 L1161.5 1000" stroke="#111" stroke-width="1.2"/><path d="M1100 998.5 L1150 977" stroke="#1a1a1a" stroke-width="3" fill="none" stroke-linecap="round"/><path d="M1100 998.5 L1150 977" stroke="#d8d8d8" stroke-width="1" fill="none"/><path d="M1101 998 L1111 1023" stroke="#1a1a1a" stroke-width="3" fill="none" stroke-linecap="round"/><path d="M1101 998 L1111 1023" stroke="#d8d8d8" stroke-width="1" fill="none"/><path d="M1133.5 942 L1101 998" stroke="#1a1a1a" stroke-width="3" fill="none" stroke-linecap="round"/><path d="M1133.5 942 L1101 998" stroke="#d8d8d8" stroke-width="1" fill="none"/><path d="M1133.5 942 L1116.5 1020" stroke="#1a1a1a" stroke-width="3" fill="none" stroke-linecap="round"/><path d="M1133.5 942 L1116.5 1020" stroke="#d8d8d8" stroke-width="1" fill="none"/><path d="M1133.5 942 L1160 999" stroke="#1a1a1a" stroke-width="3" fill="none" stroke-linecap="round"/><path d="M1133.5 942 L1160 999" stroke="#d8d8d8" stroke-width="1" fill="none"/><path d="M1331 950 L1382.5 963 L1395.5 994 L1344 981 Z" fill="#005000"/><path d="M1340 968 L1378 977 L1390 995 L1346 983 Z" fill="#fff"/><path d="M1344 981 L1395.5 994" stroke="#111" stroke-width="1.2"/><path d="M1334 958 L1381 970" stroke="#1a1a1a" stroke-width="3" fill="none" stroke-linecap="round"/><path d="M1334 958 L1381 970" stroke="#d8d8d8" stroke-width="1" fill="none"/><path d="M1359.5 917 L1332 950" stroke="#1a1a1a" stroke-width="3" fill="none" stroke-linecap="round"/><path d="M1359.5 917 L1332 950" stroke="#d8d8d8" stroke-width="1" fill="none"/><path d="M1359.5 917 L1345 980" stroke="#1a1a1a" stroke-width="3" fill="none" stroke-linecap="round"/><path d="M1359.5 917 L1345 980" stroke="#d8d8d8" stroke-width="1" fill="none"/><path d="M1359.5 917 L1390 992" stroke="#1a1a1a" stroke-width="3" fill="none" stroke-linecap="round"/><path d="M1359.5 917 L1390 992" stroke="#d8d8d8" stroke-width="1" fill="none"/><path d="M1332 950 L1344 980" stroke="#1a1a1a" stroke-width="3" fill="none" stroke-linecap="round"/><path d="M1332 950 L1344 980" stroke="#d8d8d8" stroke-width="1" fill="none"/></svg>
<svg style="position:absolute;left:1495px;top:890px;" width="64" height="45" viewBox="1495 890 64 45"><ellipse cx="1526" cy="920" rx="24" ry="11.5" fill="none" stroke="#ececec" stroke-width="4"/><ellipse cx="1526" cy="920" rx="24" ry="11.5" fill="none" stroke="#c8c8c8" stroke-width="0.8" stroke-dasharray="1 2"/><ellipse cx="1528" cy="923" rx="10" ry="3" fill="#d0d0d0" opacity="0.5"/><path d="M1516.5 899.5 L1533.5 898 L1537.5 904.5 L1519.5 907Z" fill="#f2f2f2" stroke="#8a8a8a" stroke-width="0.9"/><path d="M1519.5 907 L1537.5 904.5 V922 L1519.5 924Z" fill="#ececec" stroke="#8a8a8a" stroke-width="0.9"/><path d="M1516.5 899.5 L1519.5 907 V924 L1516.5 917Z" fill="#e2e2e2" stroke="#8a8a8a" stroke-width="0.9"/><text x="1523" y="917" font-size="5" fill="#888" font-family="Liberation Sans">LEFT</text></svg>
<div style="position:absolute;left:261px;top:657px;width:245px;height:18px;background:#f0f0f0;"></div><div class="t" style="left:288px;top:659px;font-size:11.5px;color:#111;">1 : 20</div><svg style="position:absolute;left:338px;top:657px;" width="180" height="18" viewBox="338 657 180 18"><rect x="340.5" y="658.5" width="15" height="12" rx="1" fill="#f8f8f8" stroke="#333"/><path d="M362.5 662.5 L366 658.5 H377 V667 L373.5 670.5 H362.5Z" fill="#b8dcf4" stroke="#1a6fd0" stroke-width="1.2"/><path d="M362.5 662.5 H373.5 V670.5 M373.5 662.5 L377 658.5" fill="none" stroke="#1a6fd0" stroke-width="1.2"/><g stroke="#b0b0b0" fill="none" stroke-dasharray="1.5 1"><circle cx="387" cy="664" r="3"/><path d="M387 657 V659 M381 664 H383 M383 659 L384 660"/></g><path d="M390 665 L396 671 M396 665 L390 671" stroke="#aaa" stroke-width="1.5"/><g stroke="#b0b0b0" fill="none" stroke-dasharray="1.5 1"><circle cx="410" cy="663" r="3.5"/><path d="M406 670 H413"/></g><path d="M412 665 L418 671 M418 665 L412 671" stroke="#aaa" stroke-width="1.5"/><path d="M424 667 H427 M427.5 671 V660.5 H440 M433 658.5 H436" stroke="#1a5fc0" stroke-width="1.6" fill="none"/><path d="M429 666 H433" stroke="#d02020" stroke-width="1.2" stroke-dasharray="1 1"/><path d="M432 664 L439 671 M439 664 L432 671" stroke="#e02020" stroke-width="2"/><path d="M445 667 H448 M448.5 671 V660.5 H455 M453 658.5 H456" stroke="#1a5fc0" stroke-width="1.6" fill="none"/><path d="M450 666 H454" stroke="#d02020" stroke-width="1.2" stroke-dasharray="1 1"/><circle cx="458" cy="664" r="3" fill="#9ad0f8" stroke="#1a5fc0"/><path d="M457 667 V671 H459 V667" stroke="#1a5fc0" fill="none"/><path d="M467 662 Q468 666 470 666" stroke="#222" stroke-width="1.2" fill="none"/><path d="M475 665 Q477 663 478 664" stroke="#222" stroke-width="1" fill="none"/><ellipse cx="473" cy="666.5" rx="3.2" ry="2.3" transform="rotate(-20 473 666.5)" fill="#e4f0f8" stroke="#222" stroke-width="1.1"/><ellipse cx="479.5" cy="664.5" rx="3.2" ry="2.3" transform="rotate(-20 479.5 664.5)" fill="#e4f0f8" stroke="#222" stroke-width="1.1"/><path d="M476 660 Q480 659 482 662" stroke="#222" stroke-width="1" fill="none"/><circle cx="494" cy="663" r="3" fill="#fafafa" stroke="#bbb"/><rect x="492.5" y="666" width="3" height="4" fill="#ddd" stroke="#bbb" stroke-width="0.8"/></svg>
<div style="position:absolute;left:506px;top:657px;width:387px;height:17px;background:linear-gradient(180deg,#e2e2e2,#f0f0f0 40%,#ececec);"></div><svg style="position:absolute;left:506px;top:657px;" width="387" height="17" viewBox="506 657 387 17"><path d="M517 661 L513 665.5 L517 670Z" fill="#222"/><path d="M882 661 L886 665.5 L882 670Z" fill="#222"/></svg><div style="position:absolute;left:691px;top:658px;width:15px;height:15px;background:linear-gradient(180deg,#f4f4f4,#d4d4d4);border:1px solid #9a9a9a;border-radius:2px;box-sizing:border-box;"></div>
<div style="position:absolute;left:893px;top:225px;width:16px;height:432px;background:linear-gradient(90deg,#e4e4e4,#f2f2f2 40%,#f0f0f0);"></div><svg style="position:absolute;left:893px;top:225px;" width="16" height="432" viewBox="893 225 16 432"><path d="M897 238 L901 234 L905 238Z" fill="#222"/><path d="M897 644 L901 648 L905 644Z" fill="#222"/></svg><div style="position:absolute;left:894px;top:433px;width:14px;height:15px;background:linear-gradient(90deg,#f4f4f4,#d8d8d8);border:1px solid #9a9a9a;border-radius:2px;box-sizing:border-box;"></div>
<div style="position:absolute;left:893px;top:657px;width:17px;height:18px;background:#f0f0f0;"></div>
<svg style="position:absolute;left:893px;top:657px;" width="17" height="18" viewBox="893 657 17 18"><g fill="#999"><rect x="905" y="669" width="1" height="1"/><rect x="902" y="669" width="1" height="1"/><rect x="899" y="669" width="1" height="1"/><rect x="905" y="666" width="1" height="1"/><rect x="902" y="666" width="1" height="1"/><rect x="905" y="663" width="1" height="1"/></g></svg>
<div style="position:absolute;left:893px;top:714px;width:16px;height:430px;background:linear-gradient(90deg,#e4e4e4,#f2f2f2 40%,#f0f0f0);"></div><svg style="position:absolute;left:893px;top:714px;" width="16" height="430" viewBox="893 714 16 430"><path d="M897 727 L901 723 L905 727Z" fill="#222"/><path d="M897 1131 L901 1135 L905 1131Z" fill="#222"/></svg><div style="position:absolute;left:894px;top:923px;width:14px;height:15px;background:linear-gradient(90deg,#f4f4f4,#d8d8d8);border:1px solid #9a9a9a;border-radius:2px;box-sizing:border-box;"></div>
<div style="position:absolute;left:929px;top:492px;width:246px;height:18px;background:#f0f0f0;"></div><div class="t" style="left:957px;top:494px;font-size:11.5px;color:#111;">1 : 20</div><svg style="position:absolute;left:1006px;top:492px;" width="180" height="18" viewBox="1006 492 180 18"><rect x="1008.5" y="493.5" width="15" height="12" rx="1" fill="#f8f8f8" stroke="#333"/><path d="M1030.5 497.5 L1034 493.5 H1045 V502 L1041.5 505.5 H1030.5Z" fill="#b8dcf4" stroke="#1a6fd0" stroke-width="1.2"/><path d="M1030.5 497.5 H1041.5 V505.5 M1041.5 497.5 L1045 493.5" fill="none" stroke="#1a6fd0" stroke-width="1.2"/><g stroke="#b0b0b0" fill="none" stroke-dasharray="1.5 1"><circle cx="1055" cy="499" r="3"/><path d="M1055 492 V494 M1049 499 H1051 M1051 494 L1052 495"/></g><path d="M1058 500 L1064 506 M1064 500 L1058 506" stroke="#aaa" stroke-width="1.5"/><g stroke="#b0b0b0" fill="none" stroke-dasharray="1.5 1"><circle cx="1078" cy="498" r="3.5"/><path d="M1074 505 H1081"/></g><path d="M1080 500 L1086 506 M1086 500 L1080 506" stroke="#aaa" stroke-width="1.5"/><path d="M1092 502 H1095 M1095.5 506 V495.5 H1108 M1101 493.5 H1104" stroke="#1a5fc0" stroke-width="1.6" fill="none"/><path d="M1097 501 H1101" stroke="#d02020" stroke-width="1.2" stroke-dasharray="1 1"/><path d="M1100 499 L1107 506 M1107 499 L1100 506" stroke="#e02020" stroke-width="2"/><path d="M1113 502 H1116 M1116.5 506 V495.5 H1123 M1121 493.5 H1124" stroke="#1a5fc0" stroke-width="1.6" fill="none"/><path d="M1118 501 H1122" stroke="#d02020" stroke-width="1.2" stroke-dasharray="1 1"/><circle cx="1126" cy="499" r="3" fill="#9ad0f8" stroke="#1a5fc0"/><path d="M1125 502 V506 H1127 V502" stroke="#1a5fc0" fill="none"/><path d="M1135 497 Q1136 501 1138 501" stroke="#222" stroke-width="1.2" fill="none"/><path d="M1143 500 Q1145 498 1146 499" stroke="#222" stroke-width="1" fill="none"/><ellipse cx="1141" cy="501.5" rx="3.2" ry="2.3" transform="rotate(-20 1141 501.5)" fill="#e4f0f8" stroke="#222" stroke-width="1.1"/><ellipse cx="1147.5" cy="499.5" rx="3.2" ry="2.3" transform="rotate(-20 1147.5 499.5)" fill="#e4f0f8" stroke="#222" stroke-width="1.1"/><path d="M1144 495 Q1148 494 1150 497" stroke="#222" stroke-width="1" fill="none"/><circle cx="1162" cy="498" r="3" fill="#fafafa" stroke="#bbb"/><rect x="1160.5" y="501" width="3" height="4" fill="#ddd" stroke="#bbb" stroke-width="0.8"/></svg>
<div style="position:absolute;left:1175px;top:492px;width:384px;height:17px;background:linear-gradient(180deg,#e2e2e2,#f0f0f0 40%,#ececec);"></div><svg style="position:absolute;left:1175px;top:492px;" width="384" height="17" viewBox="1175 492 384 17"><path d="M1186 496 L1182 500.5 L1186 505Z" fill="#222"/><path d="M1548 496 L1552 500.5 L1548 505Z" fill="#222"/></svg><div style="position:absolute;left:1359px;top:493px;width:15px;height:15px;background:linear-gradient(180deg,#f4f4f4,#d4d4d4);border:1px solid #9a9a9a;border-radius:2px;box-sizing:border-box;"></div>
<div style="position:absolute;left:929px;top:818px;width:266px;height:18px;background:#f0f0f0;"></div><div class="t" style="left:957px;top:820px;font-size:11.5px;color:#111;">1 : 20</div><svg style="position:absolute;left:1006px;top:818px;" width="180" height="18" viewBox="1006 818 180 18"><rect x="1008.5" y="819.5" width="15" height="12" fill="#f8f8f8" stroke="#333"/><g fill="#555"><rect x="1010" y="821" width="3" height="3"/><rect x="1016" y="821" width="3" height="3"/><rect x="1013" y="824" width="3" height="3"/><rect x="1019" y="824" width="3" height="3"/></g><g fill="#999"><rect x="1013" y="821" width="3" height="3"/><rect x="1019" y="821" width="3" height="3"/><rect x="1010" y="824" width="3" height="3"/><rect x="1016" y="824" width="3" height="3"/></g><rect x="1010" y="827" width="12" height="3" fill="#bbb"/><path d="M1030.5 823.5 L1034 819.5 H1045 V828 L1041.5 831.5 H1030.5Z" fill="#b8dcf4" stroke="#1a6fd0" stroke-width="1.2"/><path d="M1030.5 823.5 H1041.5 V831.5 M1041.5 823.5 L1045 819.5" fill="none" stroke="#1a6fd0" stroke-width="1.2"/><g stroke="#b0b0b0" fill="none" stroke-dasharray="1.5 1"><circle cx="1055" cy="825" r="3"/><path d="M1055 818 V820 M1049 825 H1051 M1051 820 L1052 821"/></g><path d="M1058 826 L1064 832 M1064 826 L1058 832" stroke="#aaa" stroke-width="1.5"/><g stroke="#b0b0b0" fill="none" stroke-dasharray="1.5 1"><circle cx="1078" cy="824" r="3.5"/><path d="M1074 831 H1081"/></g><path d="M1080 826 L1086 832 M1086 826 L1080 832" stroke="#aaa" stroke-width="1.5"/><path d="M1092 828 H1095 M1095.5 832 V821.5 H1108 M1101 819.5 H1104" stroke="#1a5fc0" stroke-width="1.6" fill="none"/><path d="M1097 827 H1101" stroke="#d02020" stroke-width="1.2" stroke-dasharray="1 1"/><path d="M1100 825 L1107 832 M1107 825 L1100 832" stroke="#e02020" stroke-width="2"/><path d="M1113 828 H1116 M1116.5 832 V821.5 H1123 M1121 819.5 H1124" stroke="#1a5fc0" stroke-width="1.6" fill="none"/><path d="M1118 827 H1122" stroke="#d02020" stroke-width="1.2" stroke-dasharray="1 1"/><circle cx="1126" cy="825" r="3" fill="#9ad0f8" stroke="#1a5fc0"/><path d="M1125 828 V832 H1127 V828" stroke="#1a5fc0" fill="none"/><path d="M1135 825 L1142 819 L1149 825 V832 H1135Z" fill="#f0f0f0" stroke="#333" stroke-width="1.1"/><rect x="1142" y="827" width="6" height="5" fill="#3c9a6a"/><path d="M1143 827 V825 Q1145 822 1147 825 V827" stroke="#333" fill="none"/><path d="M1157 823 Q1158 827 1160 827" stroke="#222" stroke-width="1.2" fill="none"/><path d="M1165 826 Q1167 824 1168 825" stroke="#222" stroke-width="1" fill="none"/><ellipse cx="1163" cy="827.5" rx="3.2" ry="2.3" transform="rotate(-20 1163 827.5)" fill="#e4f0f8" stroke="#222" stroke-width="1.1"/><ellipse cx="1169.5" cy="825.5" rx="3.2" ry="2.3" transform="rotate(-20 1169.5 825.5)" fill="#e4f0f8" stroke="#222" stroke-width="1.1"/><path d="M1166 821 Q1170 820 1172 823" stroke="#222" stroke-width="1" fill="none"/><circle cx="1184" cy="824" r="3" fill="#fafafa" stroke="#bbb"/><rect x="1182.5" y="827" width="3" height="4" fill="#ddd" stroke="#bbb" stroke-width="0.8"/></svg>
<div style="position:absolute;left:1195px;top:818px;width:364px;height:17px;background:linear-gradient(180deg,#e2e2e2,#f0f0f0 40%,#ececec);"></div><svg style="position:absolute;left:1195px;top:818px;" width="364" height="17" viewBox="1195 818 364 17"><path d="M1206 822 L1202 826.5 L1206 831Z" fill="#222"/><path d="M1548 822 L1552 826.5 L1548 831Z" fill="#222"/></svg><div style="position:absolute;left:1370px;top:819px;width:15px;height:15px;background:linear-gradient(180deg,#f4f4f4,#d4d4d4);border:1px solid #9a9a9a;border-radius:2px;box-sizing:border-box;"></div>
</body></html>
